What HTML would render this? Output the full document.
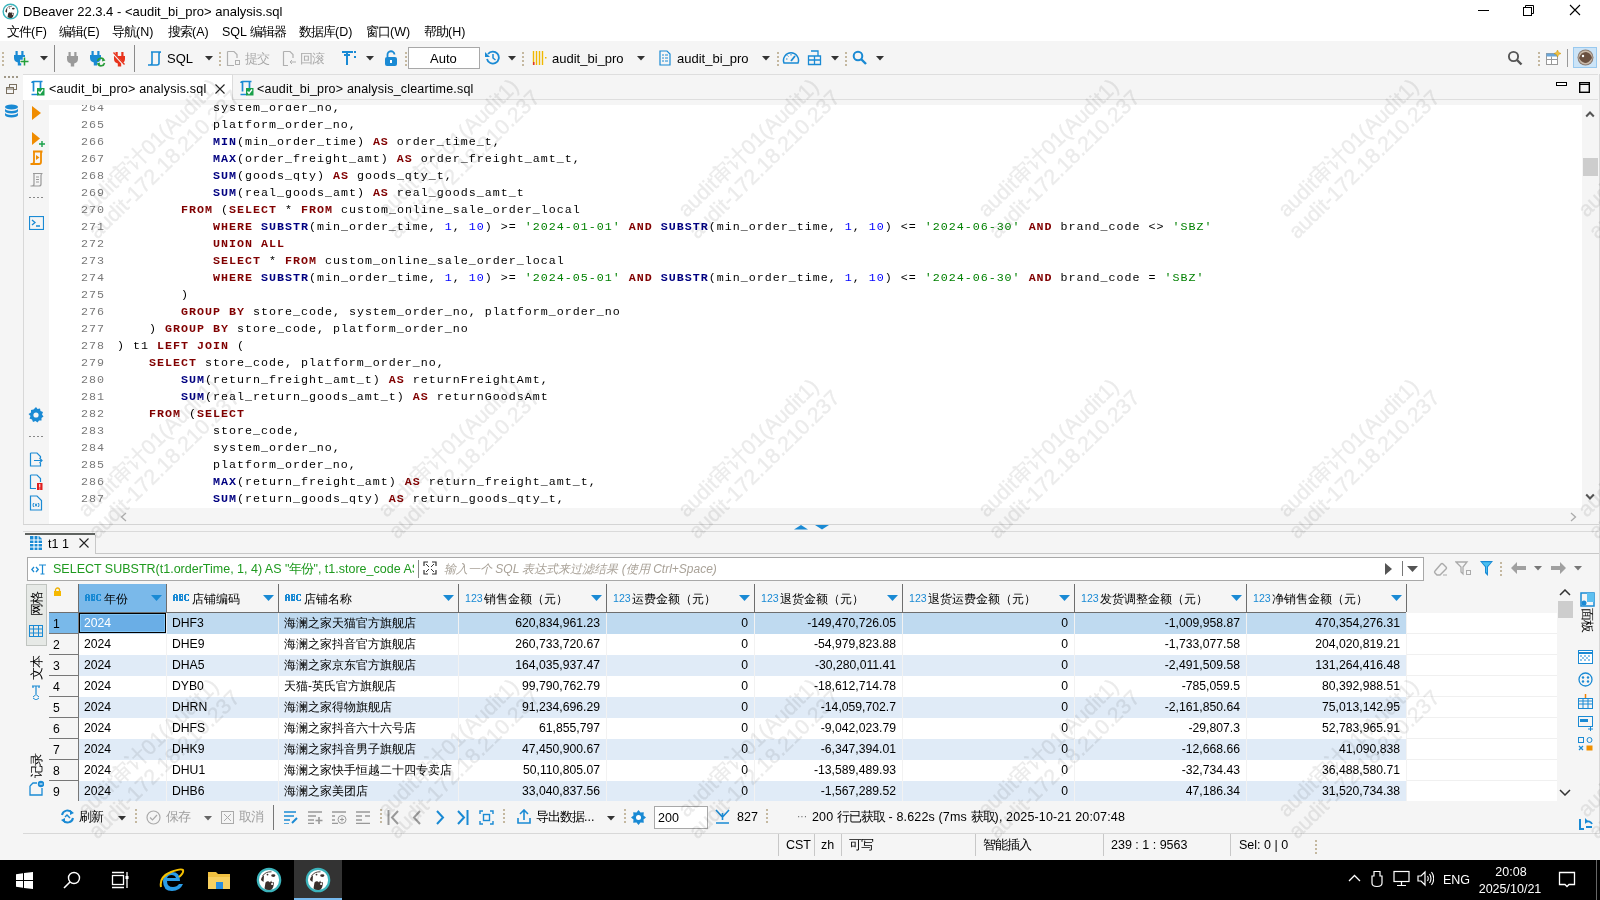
<!DOCTYPE html><html><head><meta charset="utf-8"><style>html,body{margin:0;padding:0;}body{width:1600px;height:900px;overflow:hidden;position:relative;background:#fff;font-family:"Liberation Sans",sans-serif;}div{box-sizing:border-box;}svg{display:block}</style></head><body>
<div style="position:absolute;left:0px;top:0px;width:1600px;height:41px;background:#fff"></div>
<svg style="position:absolute;left:2px;top:3px;" width="17" height="17" viewBox="0 0 17 17"><g transform="scale(0.653846)"><circle cx="13" cy="13" r="11.2" fill="#fff" stroke="#3cb4bc" stroke-width="2.2"/><path d="M5 13 Q5.5 9 8 8.5 L7.5 15 Z" fill="#3a2e2a"/><path d="M6.5 9 Q9.5 4.5 15.5 4.8" stroke="#3a2e2a" stroke-width="0.9" fill="none"/><ellipse cx="17.3" cy="8.6" rx="2.1" ry="1.4" fill="#3a2e2a"/><circle cx="11.5" cy="7.6" r="0.9" fill="#3a2e2a"/><path d="M8.5 21.5 L9.5 15.5 Q12 13 14 15.5 L15.2 13.5 Q15.5 16.5 18 15 L17.5 19 Q17 21 15.5 22.5 Q12 24 8.5 21.5Z" fill="#3a2e2a"/><rect x="15.3" y="16" width="1.6" height="2" fill="#fff"/></g></svg>
<div style="position:absolute;left:23px;top:4.60px;height:13px;line-height:13px;font-size:13px;font-family:'Liberation Sans', sans-serif;color:#000;font-weight:normal;white-space:pre;">DBeaver 22.3.4 - &lt;audit_bi_pro&gt; analysis.sql</div>
<div style="position:absolute;left:1478px;top:10px;width:11px;height:1px;background:#000"></div>
<svg style="position:absolute;left:1522px;top:4px;" width="14" height="14" viewBox="0 0 14 14"><rect x="1.5" y="3.5" width="8" height="8" fill="none" stroke="#000"/><path d="M3.5 3.5 V1.5 H11.5 V9.5 H9.5" fill="none" stroke="#000"/></svg>
<svg style="position:absolute;left:1569px;top:4px;" width="12" height="12" viewBox="0 0 12 12"><path d="M1 1 L11 11 M11 1 L1 11" stroke="#000" stroke-width="1.1"/></svg>
<div style="position:absolute;left:7px;top:26.42px;height:12.5px;line-height:12.5px;font-size:12.5px;font-family:'Liberation Sans', sans-serif;color:#000;font-weight:normal;white-space:pre;"><span style="display:inline-block;width:12px;text-align:center">文</span><span style="display:inline-block;width:12px;text-align:center">件</span>(F)</div>
<div style="position:absolute;left:59px;top:26.42px;height:12.5px;line-height:12.5px;font-size:12.5px;font-family:'Liberation Sans', sans-serif;color:#000;font-weight:normal;white-space:pre;"><span style="display:inline-block;width:12px;text-align:center">编</span><span style="display:inline-block;width:12px;text-align:center">辑</span>(E)</div>
<div style="position:absolute;left:112px;top:26.42px;height:12.5px;line-height:12.5px;font-size:12.5px;font-family:'Liberation Sans', sans-serif;color:#000;font-weight:normal;white-space:pre;"><span style="display:inline-block;width:12px;text-align:center">导</span><span style="display:inline-block;width:12px;text-align:center">航</span>(N)</div>
<div style="position:absolute;left:168px;top:26.42px;height:12.5px;line-height:12.5px;font-size:12.5px;font-family:'Liberation Sans', sans-serif;color:#000;font-weight:normal;white-space:pre;"><span style="display:inline-block;width:12px;text-align:center">搜</span><span style="display:inline-block;width:12px;text-align:center">索</span>(A)</div>
<div style="position:absolute;left:222px;top:26.42px;height:12.5px;line-height:12.5px;font-size:12.5px;font-family:'Liberation Sans', sans-serif;color:#000;font-weight:normal;white-space:pre;">SQL <span style="display:inline-block;width:12px;text-align:center">编</span><span style="display:inline-block;width:12px;text-align:center">辑</span><span style="display:inline-block;width:12px;text-align:center">器</span></div>
<div style="position:absolute;left:299px;top:26.42px;height:12.5px;line-height:12.5px;font-size:12.5px;font-family:'Liberation Sans', sans-serif;color:#000;font-weight:normal;white-space:pre;"><span style="display:inline-block;width:12px;text-align:center">数</span><span style="display:inline-block;width:12px;text-align:center">据</span><span style="display:inline-block;width:12px;text-align:center">库</span>(D)</div>
<div style="position:absolute;left:366px;top:26.42px;height:12.5px;line-height:12.5px;font-size:12.5px;font-family:'Liberation Sans', sans-serif;color:#000;font-weight:normal;white-space:pre;"><span style="display:inline-block;width:12px;text-align:center">窗</span><span style="display:inline-block;width:12px;text-align:center">口</span>(W)</div>
<div style="position:absolute;left:424px;top:26.42px;height:12.5px;line-height:12.5px;font-size:12.5px;font-family:'Liberation Sans', sans-serif;color:#000;font-weight:normal;white-space:pre;"><span style="display:inline-block;width:12px;text-align:center">帮</span><span style="display:inline-block;width:12px;text-align:center">助</span>(H)</div>
<div style="position:absolute;left:0px;top:41px;width:1600px;height:33px;background:#f5f5f5"></div>
<div style="position:absolute;left:2px;top:52px;width:2px;height:2px;background:#c4b8a0"></div>
<div style="position:absolute;left:2px;top:56px;width:2px;height:2px;background:#c4b8a0"></div>
<div style="position:absolute;left:2px;top:60px;width:2px;height:2px;background:#c4b8a0"></div>
<div style="position:absolute;left:2px;top:64px;width:2px;height:2px;background:#c4b8a0"></div>
<svg style="position:absolute;left:14px;top:51px;" width="12" height="15" viewBox="0 0 12 15"><rect x="1.5" y="0" width="2.2" height="4" fill="#1a8ad4"/><rect x="7.3" y="0" width="2.2" height="4" fill="#1a8ad4"/><path d="M0 4 H11 V7 Q11 10.5 7.2 11.5 V14.5 H3.8 V11.5 Q0 10.5 0 7Z" fill="#1a8ad4"/></svg>
<svg style="position:absolute;left:20px;top:57px;" width="9" height="9" viewBox="0 0 9 9"><path d="M4.5 0 V9 M0 4.5 H9" stroke="#f5f5f5" stroke-width="3.5"/><path d="M4.5 0.5 V8.5 M0.5 4.5 H8.5" stroke="#22a03a" stroke-width="1.5"/></svg>
<svg style="position:absolute;left:40px;top:56px;" width="8" height="5" viewBox="0 0 8 5"><path d="M0 0 H8 L4 4.5Z" fill="#333"/></svg>
<div style="position:absolute;left:54px;top:45px;width:1px;height:27px;background:#8a8a8a"></div>
<svg style="position:absolute;left:67px;top:52px;" width="12" height="15" viewBox="0 0 12 15"><rect x="1.5" y="0" width="2.2" height="4" fill="#9a9a9a"/><rect x="7.3" y="0" width="2.2" height="4" fill="#9a9a9a"/><path d="M0 4 H11 V7 Q11 10.5 7.2 11.5 V14.5 H3.8 V11.5 Q0 10.5 0 7Z" fill="#9a9a9a"/></svg>
<svg style="position:absolute;left:90px;top:51px;" width="12" height="15" viewBox="0 0 12 15"><rect x="1.5" y="0" width="2.2" height="4" fill="#1a8ad4"/><rect x="7.3" y="0" width="2.2" height="4" fill="#1a8ad4"/><path d="M0 4 H11 V7 Q11 10.5 7.2 11.5 V14.5 H3.8 V11.5 Q0 10.5 0 7Z" fill="#1a8ad4"/></svg>
<svg style="position:absolute;left:96px;top:57px;" width="10" height="10" viewBox="0 0 10 10"><path d="M1.5 4 A3.5 3.5 0 0 1 8 3 M8.5 6 A3.5 3.5 0 0 1 2 7" stroke="#2a9d3a" stroke-width="1.6" fill="none"/><path d="M6.5 1 L9.5 3.5 L6 4.5Z M3.5 9 L0.5 6.5 L4 5.5Z" fill="#2a9d3a"/></svg>
<svg style="position:absolute;left:114px;top:52px;" width="12" height="15" viewBox="0 0 12 15"><rect x="1.5" y="0" width="2.2" height="4" fill="#e8331c"/><rect x="7.3" y="0" width="2.2" height="4" fill="#e8331c"/><path d="M0 4 H11 V7 Q11 10.5 7.2 11.5 V14.5 H3.8 V11.5 Q0 10.5 0 7Z" fill="#e8331c"/></svg>
<svg style="position:absolute;left:112px;top:52px;" width="14" height="14" viewBox="0 0 14 14"><path d="M2 2 L12 13" stroke="#f5f5f5" stroke-width="2.2"/><path d="M1.5 0.5 L12.5 12.5" stroke="#e8331c" stroke-width="1.3"/></svg>
<div style="position:absolute;left:134px;top:45px;width:1px;height:27px;background:#8a8a8a"></div>
<svg style="position:absolute;left:147px;top:51px;" width="16" height="15" viewBox="0 0 16 15"><path d="M4 1 H14 M5 1 V12 Q5 14 3 14 H1 M14 1 Q12 1 12 3 V12 Q12 14 10 14 H2" stroke="#1a8ad4" stroke-width="1.6" fill="none"/></svg>
<div style="position:absolute;left:167px;top:52.30px;height:13px;line-height:13px;font-size:13px;font-family:'Liberation Sans', sans-serif;color:#000;font-weight:normal;white-space:pre;">SQL</div>
<svg style="position:absolute;left:205px;top:56px;" width="8" height="5" viewBox="0 0 8 5"><path d="M0 0 H8 L4 4.5Z" fill="#333"/></svg>
<div style="position:absolute;left:219px;top:52px;width:2px;height:2px;background:#c4b8a0"></div>
<div style="position:absolute;left:219px;top:56px;width:2px;height:2px;background:#c4b8a0"></div>
<div style="position:absolute;left:219px;top:60px;width:2px;height:2px;background:#c4b8a0"></div>
<div style="position:absolute;left:219px;top:64px;width:2px;height:2px;background:#c4b8a0"></div>
<svg style="position:absolute;left:226px;top:50px;" width="15" height="17" viewBox="0 0 15 17"><path d="M1.5 1.5 H8 L11 4.5 V8 M1.5 1.5 V15.5 H8" stroke="#b0b0b0" stroke-width="1.2" fill="none"/><rect x="9.5" y="10.5" width="4" height="4" stroke="#b0b0b0" fill="none"/></svg>
<div style="position:absolute;left:245px;top:53.42px;height:12.5px;line-height:12.5px;font-size:12.5px;font-family:'Liberation Sans', sans-serif;color:#a8a8a8;font-weight:normal;white-space:pre;"><span style="display:inline-block;width:12px;text-align:center">提</span><span style="display:inline-block;width:12px;text-align:center">交</span></div>
<svg style="position:absolute;left:282px;top:50px;" width="15" height="17" viewBox="0 0 15 17"><path d="M1.5 1.5 H8 L11 4.5 V8 M1.5 1.5 V15.5 H6" stroke="#b0b0b0" stroke-width="1.2" fill="none"/><path d="M8 12 H14 M10 10 L8 12 L10 14" stroke="#b0b0b0" fill="none"/></svg>
<div style="position:absolute;left:300px;top:53.42px;height:12.5px;line-height:12.5px;font-size:12.5px;font-family:'Liberation Sans', sans-serif;color:#a8a8a8;font-weight:normal;white-space:pre;"><span style="display:inline-block;width:12px;text-align:center">回</span><span style="display:inline-block;width:12px;text-align:center">滚</span></div>
<svg style="position:absolute;left:341px;top:50px;" width="16" height="16" viewBox="0 0 16 16"><path d="M1 2 H12 M6 2 V15 M3 5 H9" stroke="#1a8ad4" stroke-width="2" fill="none"/><rect x="13" y="1" width="2" height="2" fill="#1a8ad4"/><rect x="13" y="6" width="2" height="2" fill="#1a8ad4"/></svg>
<svg style="position:absolute;left:366px;top:56px;" width="8" height="5" viewBox="0 0 8 5"><path d="M0 0 H8 L4 4.5Z" fill="#333"/></svg>
<svg style="position:absolute;left:384px;top:50px;" width="14" height="16" viewBox="0 0 14 16"><path d="M3.5 7 V5 A3.5 3.5 0 0 1 10.5 4.5" stroke="#1a8ad4" stroke-width="1.8" fill="none"/><rect x="1" y="7" width="12" height="9" rx="2" fill="#1a8ad4"/><rect x="6" y="10" width="2" height="3" fill="#fff"/></svg>
<div style="position:absolute;left:405px;top:52px;width:2px;height:2px;background:#c4b8a0"></div>
<div style="position:absolute;left:405px;top:56px;width:2px;height:2px;background:#c4b8a0"></div>
<div style="position:absolute;left:405px;top:60px;width:2px;height:2px;background:#c4b8a0"></div>
<div style="position:absolute;left:405px;top:64px;width:2px;height:2px;background:#c4b8a0"></div>
<div style="position:absolute;left:408px;top:47px;width:72px;height:22px;background:#fff;border:1px solid #a8a8a8"></div>
<div style="position:absolute;left:430px;top:52.30px;height:13px;line-height:13px;font-size:13px;font-family:'Liberation Sans', sans-serif;color:#000;font-weight:normal;white-space:pre;">Auto</div>
<svg style="position:absolute;left:485px;top:50px;" width="15" height="15" viewBox="0 0 15 15"><path d="M3 4 A6 6 0 1 1 2 9" stroke="#1a8ad4" stroke-width="1.8" fill="none"/><path d="M0 2 L5 7 L0 7Z" fill="#1a8ad4"/><path d="M8 4 V8 L10.5 10" stroke="#1a8ad4" stroke-width="1.5" fill="none"/></svg>
<svg style="position:absolute;left:508px;top:56px;" width="8" height="5" viewBox="0 0 8 5"><path d="M0 0 H8 L4 4.5Z" fill="#333"/></svg>
<div style="position:absolute;left:522px;top:52px;width:2px;height:2px;background:#c4b8a0"></div>
<div style="position:absolute;left:522px;top:56px;width:2px;height:2px;background:#c4b8a0"></div>
<div style="position:absolute;left:522px;top:60px;width:2px;height:2px;background:#c4b8a0"></div>
<div style="position:absolute;left:522px;top:64px;width:2px;height:2px;background:#c4b8a0"></div>
<svg style="position:absolute;left:532px;top:50px;" width="15" height="16" viewBox="0 0 15 16"><path d="M1.5 1 V15 M4.5 1 V15 M7.5 1 V15 M10.5 1 V15" stroke="#f0b800" stroke-width="1.4"/><rect x="13" y="7" width="1.5" height="1.5" fill="#f0b800"/><rect x="1" y="12" width="1.5" height="3" fill="#e03030"/></svg>
<div style="position:absolute;left:552px;top:52.30px;height:13px;line-height:13px;font-size:13px;font-family:'Liberation Sans', sans-serif;color:#000;font-weight:normal;white-space:pre;">audit_bi_pro</div>
<svg style="position:absolute;left:637px;top:56px;" width="8" height="5" viewBox="0 0 8 5"><path d="M0 0 H8 L4 4.5Z" fill="#333"/></svg>
<svg style="position:absolute;left:659px;top:50px;" width="12" height="16" viewBox="0 0 12 16"><path d="M1 1 H8 L11 4 V15 H1Z" stroke="#1a8ad4" stroke-width="1.2" fill="none"/><path d="M3 5 H5 M6 5 H9 M3 8 H5 M6 8 H9 M3 11 H5 M6 11 H9" stroke="#1a8ad4"/></svg>
<div style="position:absolute;left:677px;top:52.30px;height:13px;line-height:13px;font-size:13px;font-family:'Liberation Sans', sans-serif;color:#000;font-weight:normal;white-space:pre;">audit_bi_pro</div>
<svg style="position:absolute;left:762px;top:56px;" width="8" height="5" viewBox="0 0 8 5"><path d="M0 0 H8 L4 4.5Z" fill="#333"/></svg>
<div style="position:absolute;left:777px;top:52px;width:2px;height:2px;background:#c4b8a0"></div>
<div style="position:absolute;left:777px;top:56px;width:2px;height:2px;background:#c4b8a0"></div>
<div style="position:absolute;left:777px;top:60px;width:2px;height:2px;background:#c4b8a0"></div>
<div style="position:absolute;left:777px;top:64px;width:2px;height:2px;background:#c4b8a0"></div>
<svg style="position:absolute;left:782px;top:50px;" width="18" height="16" viewBox="0 0 18 16"><path d="M2 13 A7.5 7.5 0 1 1 16 13 Z" stroke="#1a8ad4" stroke-width="1.5" fill="none"/><path d="M9 11 L13 6" stroke="#1a8ad4" stroke-width="1.8"/><path d="M4 9 H5.5 M9 4 V5.5 M5.5 5.5 L6.5 6.5" stroke="#1a8ad4"/></svg>
<svg style="position:absolute;left:807px;top:50px;" width="15" height="16" viewBox="0 0 15 16"><path d="M4 1 H11 V6 M1.5 6 H13.5 V14.5 H1.5Z M1.5 10 H13.5 M7.5 6 V14.5" stroke="#1a8ad4" stroke-width="1.3" fill="none"/></svg>
<svg style="position:absolute;left:831px;top:56px;" width="8" height="5" viewBox="0 0 8 5"><path d="M0 0 H8 L4 4.5Z" fill="#333"/></svg>
<div style="position:absolute;left:845px;top:52px;width:2px;height:2px;background:#c4b8a0"></div>
<div style="position:absolute;left:845px;top:56px;width:2px;height:2px;background:#c4b8a0"></div>
<div style="position:absolute;left:845px;top:60px;width:2px;height:2px;background:#c4b8a0"></div>
<div style="position:absolute;left:845px;top:64px;width:2px;height:2px;background:#c4b8a0"></div>
<svg style="position:absolute;left:852px;top:50px;" width="15" height="15" viewBox="0 0 15 15"><circle cx="6" cy="6" r="4.3" stroke="#1a8ad4" stroke-width="2" fill="none"/><path d="M9 9 L14 14" stroke="#1a8ad4" stroke-width="2.4"/></svg>
<svg style="position:absolute;left:876px;top:56px;" width="8" height="5" viewBox="0 0 8 5"><path d="M0 0 H8 L4 4.5Z" fill="#333"/></svg>
<svg style="position:absolute;left:1507px;top:50px;" width="16" height="16" viewBox="0 0 16 16"><circle cx="6.5" cy="6.5" r="4.6" stroke="#555" stroke-width="1.9" fill="none"/><path d="M10 10 L14.5 14.5" stroke="#555" stroke-width="2.4"/></svg>
<div style="position:absolute;left:1538px;top:52px;width:2px;height:2px;background:#c4b8a0"></div>
<div style="position:absolute;left:1538px;top:56px;width:2px;height:2px;background:#c4b8a0"></div>
<div style="position:absolute;left:1538px;top:60px;width:2px;height:2px;background:#c4b8a0"></div>
<div style="position:absolute;left:1538px;top:64px;width:2px;height:2px;background:#c4b8a0"></div>
<svg style="position:absolute;left:1545px;top:49px;" width="17" height="17" viewBox="0 0 17 17"><rect x="1.5" y="4.5" width="11" height="11" stroke="#999" fill="#fff"/><rect x="1.5" y="4.5" width="11" height="3" fill="#6aa6d8"/><path d="M1.5 10.5 H12.5 M6.5 7.5 V15.5" stroke="#999"/><path d="M12.5 1 L13.6 3.4 L16 4.5 L13.6 5.6 L12.5 8 L11.4 5.6 L9 4.5 L11.4 3.4Z" fill="#f0c040" stroke="#c89000" stroke-width="0.5"/></svg>
<div style="position:absolute;left:1567px;top:49px;width:1px;height:18px;background:#999"></div>
<div style="position:absolute;left:1573px;top:47px;width:24px;height:21px;background:#cce4f7;border:1px solid #99c9ef"></div>
<svg style="position:absolute;left:1577px;top:49px;" width="17" height="17" viewBox="0 0 17 17"><circle cx="8.5" cy="8.5" r="8" fill="#8a7a70"/><circle cx="8.5" cy="8.5" r="7" fill="#c8b8a8"/><path d="M2 9 Q4 3 9 3 Q14 4 15 9 Q12 14 8 14 Q4 13 2 9Z" fill="#6a5040"/><circle cx="6" cy="7" r="1.2" fill="#fff"/></svg>
<div style="position:absolute;left:0px;top:74px;width:23px;height:786px;background:#f5f5f5"></div>
<div style="position:absolute;left:23px;top:74px;width:1px;height:759px;background:#d8d8d8"></div>
<div style="position:absolute;left:4px;top:76px;width:2px;height:2px;background:#a09888"></div>
<div style="position:absolute;left:8px;top:76px;width:2px;height:2px;background:#a09888"></div>
<div style="position:absolute;left:12px;top:76px;width:2px;height:2px;background:#a09888"></div>
<div style="position:absolute;left:16px;top:76px;width:2px;height:2px;background:#a09888"></div>
<svg style="position:absolute;left:6px;top:84px;" width="11" height="10" viewBox="0 0 11 10"><rect x="3.5" y="0.5" width="7" height="5" fill="none" stroke="#7a7060"/><rect x="0.5" y="3.5" width="7" height="6" fill="#f5f5f5" stroke="#7a7060"/><path d="M1 5 H7" stroke="#7a7060"/></svg>
<svg style="position:absolute;left:4px;top:104px;" width="15" height="15" viewBox="0 0 15 15"><ellipse cx="7.5" cy="3" rx="6.5" ry="2.5" fill="#1a8ad4"/><path d="M1 4.5 V7 A6.5 2.5 0 0 0 14 7 V4.5 A6.5 2.5 0 0 1 1 4.5Z M1 8.5 V11 A6.5 2.5 0 0 0 14 11 V8.5 A6.5 2.5 0 0 1 1 8.5Z" fill="#1a8ad4"/></svg>
<div style="position:absolute;left:24px;top:74px;width:1576px;height:26px;background:#f5f5f5"></div>
<div style="position:absolute;left:232px;top:74px;width:1366px;height:1px;background:#dedede"></div>
<div style="position:absolute;left:232px;top:99px;width:1366px;height:1px;background:#dedede"></div>
<div style="position:absolute;left:23px;top:74px;width:210px;height:26px;background:#fff;border:1px solid #dcdcdc;border-bottom:none;border-left:none"></div>
<svg style="position:absolute;left:29px;top:80px;" width="16" height="16" viewBox="0 0 16 16"><path d="M2.5 14.5 H9 M3 3 Q3 1.5 4.5 1.5 H13.5 M4.5 2 V11.5 M11.5 2 V10" stroke="#1a8ad4" stroke-width="1.7" fill="none"/><rect x="8" y="8" width="7.5" height="7.5" fill="#1aa04a"/><path d="M9.5 11.5 L11 13.5 L14 9.5" stroke="#fff" stroke-width="1.3" fill="none"/></svg>
<div style="position:absolute;left:49px;top:83.12px;height:12.5px;line-height:12.5px;font-size:12.5px;font-family:'Liberation Sans', sans-serif;color:#000;font-weight:normal;white-space:pre;letter-spacing:0.22px">&lt;audit_bi_pro&gt; analysis.sql</div>
<svg style="position:absolute;left:215px;top:84px;" width="10" height="10" viewBox="0 0 10 10"><path d="M0.5 0.5 L9.5 9.5 M9.5 0.5 L0.5 9.5" stroke="#222" stroke-width="1.1"/></svg>
<svg style="position:absolute;left:238px;top:80px;" width="16" height="16" viewBox="0 0 16 16"><path d="M2.5 14.5 H9 M3 3 Q3 1.5 4.5 1.5 H13.5 M4.5 2 V11.5 M11.5 2 V10" stroke="#1a8ad4" stroke-width="1.7" fill="none"/><rect x="8" y="8" width="7.5" height="7.5" fill="#1aa04a"/><path d="M9.5 11.5 L11 13.5 L14 9.5" stroke="#fff" stroke-width="1.3" fill="none"/></svg>
<div style="position:absolute;left:257px;top:83.12px;height:12.5px;line-height:12.5px;font-size:12.5px;font-family:'Liberation Sans', sans-serif;color:#000;font-weight:normal;white-space:pre;letter-spacing:0.2px">&lt;audit_bi_pro&gt; analysis_cleartime.sql</div>
<div style="position:absolute;left:1556px;top:82px;width:11px;height:4px;border:1px solid #000;background:#fff"></div>
<svg style="position:absolute;left:1579px;top:82px;" width="11" height="11" viewBox="0 0 11 11"><rect x="0.7" y="0.7" width="9.6" height="9.6" fill="none" stroke="#000" stroke-width="1.4"/><path d="M0.5 2.5 H10.5" stroke="#000" stroke-width="1"/></svg>
<div style="position:absolute;left:24px;top:100px;width:1575px;height:424px;background:#f5f5f5"></div>
<div style="position:absolute;left:49px;top:105px;width:1533px;height:419px;background:#fff"></div>
<svg style="position:absolute;left:32px;top:106px;" width="9" height="14" viewBox="0 0 9 14"><path d="M0 0 L9 7 L0 14Z" fill="#f08c00"/></svg>
<svg style="position:absolute;left:32px;top:132px;" width="13" height="15" viewBox="0 0 13 15"><path d="M0 0 L8 6.5 L0 13Z" fill="#f08c00"/><path d="M10 9 V15 M7 12 H13" stroke="#1aa04a" stroke-width="1.4"/></svg>
<svg style="position:absolute;left:29px;top:150px;" width="15" height="15" viewBox="0 0 15 15"><path d="M4 1.5 H13.5 M5 1.5 V12 Q5 14 3 14 H1.5 M13.5 1.5 Q12 1.5 12 3.5 V12 Q12 14 10 14 H3" stroke="#f08c00" stroke-width="1.8" fill="none"/><path d="M7 5 L10.5 7.5 L7 10Z" fill="#f08c00"/></svg>
<svg style="position:absolute;left:29px;top:172px;" width="15" height="15" viewBox="0 0 15 15"><path d="M4 1.5 H13.5 M5 1.5 V12 Q5 14 3 14 H1.5 M13.5 1.5 Q12 1.5 12 3.5 V12 Q12 14 10 14 H3" stroke="#999" stroke-width="1.2" fill="none"/><path d="M7 5 H10 M7 7.5 H10 M7 10 H10" stroke="#999"/></svg>
<div style="position:absolute;left:29px;top:197px;width:2px;height:1px;background:#888"></div>
<div style="position:absolute;left:33px;top:197px;width:2px;height:1px;background:#888"></div>
<div style="position:absolute;left:37px;top:197px;width:2px;height:1px;background:#888"></div>
<div style="position:absolute;left:41px;top:197px;width:2px;height:1px;background:#888"></div>
<svg style="position:absolute;left:29px;top:216px;" width="15" height="14" viewBox="0 0 15 14"><rect x="0.5" y="0.5" width="14" height="13" fill="none" stroke="#1a8ad4" stroke-width="1.2"/><path d="M3 4 L6 6.5 L3 9 M7 10 H11" stroke="#1a8ad4" stroke-width="1.3" fill="none"/></svg>
<svg style="position:absolute;left:28px;top:407px;" width="16" height="16" viewBox="0 0 16 16"><path d="M8 0 L9.5 2 L12 1.5 L12.5 4 L15 5 L14 7.5 L15.5 9.5 L13.5 11 L13.5 13.5 L11 13.5 L9.5 15.5 L7.5 14 L5 15 L4 12.5 L1.5 11.5 L2.5 9 L0.5 7 L3 5.5 L3 3 L5.5 2.5 Z" fill="#1a8ad4"/><circle cx="8" cy="8" r="2.6" fill="#f5f5f5"/></svg>
<div style="position:absolute;left:29px;top:436px;width:2px;height:1px;background:#888"></div>
<div style="position:absolute;left:33px;top:436px;width:2px;height:1px;background:#888"></div>
<div style="position:absolute;left:37px;top:436px;width:2px;height:1px;background:#888"></div>
<div style="position:absolute;left:41px;top:436px;width:2px;height:1px;background:#888"></div>
<svg style="position:absolute;left:29px;top:452px;" width="14" height="15" viewBox="0 0 14 15"><path d="M1.5 1 H8 L11.5 4.5 V6 M1.5 1 V14 H11.5 V11" stroke="#1a8ad4" stroke-width="1.2" fill="none"/><path d="M5 8.5 H13 M10.5 6 L13 8.5 L10.5 11" stroke="#1a8ad4" stroke-width="1.2" fill="none"/></svg>
<svg style="position:absolute;left:29px;top:474px;" width="14" height="16" viewBox="0 0 14 16"><path d="M1.5 1 H8 L11.5 4.5 V8 M1.5 1 V14.5 H7" stroke="#1a8ad4" stroke-width="1.2" fill="none"/><rect x="8" y="9" width="5.5" height="7" fill="#e02020"/><path d="M10.75 10 V13.5 M10.75 14.5 V15.5" stroke="#fff"/></svg>
<svg style="position:absolute;left:29px;top:495px;" width="14" height="16" viewBox="0 0 14 16"><path d="M1.5 1 H8 L12.5 5.5 V15 H1.5Z" stroke="#1a8ad4" stroke-width="1.2" fill="none"/><path d="M4.5 8 Q3.5 10 4.5 12 M9.5 8 Q10.5 10 9.5 12 M6 8.5 L8 11.5 M8 8.5 L6 11.5" stroke="#1a8ad4" fill="none"/></svg>
<div style="position:absolute;left:1582px;top:105px;width:17px;height:419px;background:#f5f5f5"></div>
<svg style="position:absolute;left:1585px;top:110px;" width="10" height="8" viewBox="0 0 10 8"><path d="M1.2 6.5 L5 2.5 L8.8 6.5" stroke="#555" stroke-width="2" fill="none"/></svg>
<div style="position:absolute;left:1583px;top:158px;width:15px;height:18px;background:#cdcdcd"></div>
<svg style="position:absolute;left:1585px;top:493px;" width="10" height="8" viewBox="0 0 10 8"><path d="M1.2 1.5 L5 5.5 L8.8 1.5" stroke="#555" stroke-width="2" fill="none"/></svg>
<div style="position:absolute;left:110px;top:508px;width:1472px;height:16px;background:#f5f5f5"></div>
<svg style="position:absolute;left:120px;top:512px;" width="7" height="10" viewBox="0 0 7 10"><path d="M6 1 L1.5 5 L6 9" stroke="#aaa" stroke-width="1.3" fill="none"/></svg>
<svg style="position:absolute;left:1570px;top:512px;" width="7" height="10" viewBox="0 0 7 10"><path d="M1 1 L5.5 5 L1 9" stroke="#aaa" stroke-width="1.3" fill="none"/></svg>
<div style="position:absolute;left:23px;top:524px;width:1576px;height:1px;background:#d4d4d4"></div>
<div style="position:absolute;left:49px;top:105px;width:1533px;height:402px;overflow:hidden">
<div style="position:absolute;left:0;top:-5.11px;height:17px;line-height:17px;font-size:11.667px;font-family:'Liberation Mono', monospace;white-space:pre;color:#000;letter-spacing:1px"><span style="display:inline-block;width:56px;text-align:right;color:#787878">264</span><span style="position:absolute;left:68px">            system_order_no,</span></div>
<div style="position:absolute;left:0;top:11.89px;height:17px;line-height:17px;font-size:11.667px;font-family:'Liberation Mono', monospace;white-space:pre;color:#000;letter-spacing:1px"><span style="display:inline-block;width:56px;text-align:right;color:#787878">265</span><span style="position:absolute;left:68px">            platform_order_no,</span></div>
<div style="position:absolute;left:0;top:28.89px;height:17px;line-height:17px;font-size:11.667px;font-family:'Liberation Mono', monospace;white-space:pre;color:#000;letter-spacing:1px"><span style="display:inline-block;width:56px;text-align:right;color:#787878">266</span><span style="position:absolute;left:68px">            <b style="color:#000080">MIN</b>(min_order_time) <b style="color:#800000">AS</b> order_time_t,</span></div>
<div style="position:absolute;left:0;top:45.89px;height:17px;line-height:17px;font-size:11.667px;font-family:'Liberation Mono', monospace;white-space:pre;color:#000;letter-spacing:1px"><span style="display:inline-block;width:56px;text-align:right;color:#787878">267</span><span style="position:absolute;left:68px">            <b style="color:#000080">MAX</b>(order_freight_amt) <b style="color:#800000">AS</b> order_freight_amt_t,</span></div>
<div style="position:absolute;left:0;top:62.89px;height:17px;line-height:17px;font-size:11.667px;font-family:'Liberation Mono', monospace;white-space:pre;color:#000;letter-spacing:1px"><span style="display:inline-block;width:56px;text-align:right;color:#787878">268</span><span style="position:absolute;left:68px">            <b style="color:#000080">SUM</b>(goods_qty) <b style="color:#800000">AS</b> goods_qty_t,</span></div>
<div style="position:absolute;left:0;top:79.89px;height:17px;line-height:17px;font-size:11.667px;font-family:'Liberation Mono', monospace;white-space:pre;color:#000;letter-spacing:1px"><span style="display:inline-block;width:56px;text-align:right;color:#787878">269</span><span style="position:absolute;left:68px">            <b style="color:#000080">SUM</b>(real_goods_amt) <b style="color:#800000">AS</b> real_goods_amt_t</span></div>
<div style="position:absolute;left:0;top:96.89px;height:17px;line-height:17px;font-size:11.667px;font-family:'Liberation Mono', monospace;white-space:pre;color:#000;letter-spacing:1px"><span style="display:inline-block;width:56px;text-align:right;color:#787878">270</span><span style="position:absolute;left:68px">        <b style="color:#800000">FROM</b> (<b style="color:#800000">SELECT</b> * <b style="color:#800000">FROM</b> custom_online_sale_order_local</span></div>
<div style="position:absolute;left:0;top:113.89px;height:17px;line-height:17px;font-size:11.667px;font-family:'Liberation Mono', monospace;white-space:pre;color:#000;letter-spacing:1px"><span style="display:inline-block;width:56px;text-align:right;color:#787878">271</span><span style="position:absolute;left:68px">            <b style="color:#800000">WHERE</b> <b style="color:#000080">SUBSTR</b>(min_order_time, <span style="color:#0000ff">1</span>, <span style="color:#0000ff">10</span>) &gt;= <span style="color:#008000">&#x27;2024-01-01&#x27;</span> <b style="color:#800000">AND</b> <b style="color:#000080">SUBSTR</b>(min_order_time, <span style="color:#0000ff">1</span>, <span style="color:#0000ff">10</span>) &lt;= <span style="color:#008000">&#x27;2024-06-30&#x27;</span> <b style="color:#800000">AND</b> brand_code &lt;&gt; <span style="color:#008000">&#x27;SBZ&#x27;</span></span></div>
<div style="position:absolute;left:0;top:130.89px;height:17px;line-height:17px;font-size:11.667px;font-family:'Liberation Mono', monospace;white-space:pre;color:#000;letter-spacing:1px"><span style="display:inline-block;width:56px;text-align:right;color:#787878">272</span><span style="position:absolute;left:68px">            <b style="color:#800000">UNION</b> <b style="color:#800000">ALL</b></span></div>
<div style="position:absolute;left:0;top:147.89px;height:17px;line-height:17px;font-size:11.667px;font-family:'Liberation Mono', monospace;white-space:pre;color:#000;letter-spacing:1px"><span style="display:inline-block;width:56px;text-align:right;color:#787878">273</span><span style="position:absolute;left:68px">            <b style="color:#800000">SELECT</b> * <b style="color:#800000">FROM</b> custom_online_sale_order_local</span></div>
<div style="position:absolute;left:0;top:164.89px;height:17px;line-height:17px;font-size:11.667px;font-family:'Liberation Mono', monospace;white-space:pre;color:#000;letter-spacing:1px"><span style="display:inline-block;width:56px;text-align:right;color:#787878">274</span><span style="position:absolute;left:68px">            <b style="color:#800000">WHERE</b> <b style="color:#000080">SUBSTR</b>(min_order_time, <span style="color:#0000ff">1</span>, <span style="color:#0000ff">10</span>) &gt;= <span style="color:#008000">&#x27;2024-05-01&#x27;</span> <b style="color:#800000">AND</b> <b style="color:#000080">SUBSTR</b>(min_order_time, <span style="color:#0000ff">1</span>, <span style="color:#0000ff">10</span>) &lt;= <span style="color:#008000">&#x27;2024-06-30&#x27;</span> <b style="color:#800000">AND</b> brand_code = <span style="color:#008000">&#x27;SBZ&#x27;</span></span></div>
<div style="position:absolute;left:0;top:181.89px;height:17px;line-height:17px;font-size:11.667px;font-family:'Liberation Mono', monospace;white-space:pre;color:#000;letter-spacing:1px"><span style="display:inline-block;width:56px;text-align:right;color:#787878">275</span><span style="position:absolute;left:68px">        )</span></div>
<div style="position:absolute;left:0;top:198.89px;height:17px;line-height:17px;font-size:11.667px;font-family:'Liberation Mono', monospace;white-space:pre;color:#000;letter-spacing:1px"><span style="display:inline-block;width:56px;text-align:right;color:#787878">276</span><span style="position:absolute;left:68px">        <b style="color:#800000">GROUP</b> <b style="color:#800000">BY</b> store_code, system_order_no, platform_order_no</span></div>
<div style="position:absolute;left:0;top:215.89px;height:17px;line-height:17px;font-size:11.667px;font-family:'Liberation Mono', monospace;white-space:pre;color:#000;letter-spacing:1px"><span style="display:inline-block;width:56px;text-align:right;color:#787878">277</span><span style="position:absolute;left:68px">    ) <b style="color:#800000">GROUP</b> <b style="color:#800000">BY</b> store_code, platform_order_no</span></div>
<div style="position:absolute;left:0;top:232.89px;height:17px;line-height:17px;font-size:11.667px;font-family:'Liberation Mono', monospace;white-space:pre;color:#000;letter-spacing:1px"><span style="display:inline-block;width:56px;text-align:right;color:#787878">278</span><span style="position:absolute;left:68px">) t1 <b style="color:#800000">LEFT</b> <b style="color:#800000">JOIN</b> (</span></div>
<div style="position:absolute;left:0;top:249.89px;height:17px;line-height:17px;font-size:11.667px;font-family:'Liberation Mono', monospace;white-space:pre;color:#000;letter-spacing:1px"><span style="display:inline-block;width:56px;text-align:right;color:#787878">279</span><span style="position:absolute;left:68px">    <b style="color:#800000">SELECT</b> store_code, platform_order_no,</span></div>
<div style="position:absolute;left:0;top:266.89px;height:17px;line-height:17px;font-size:11.667px;font-family:'Liberation Mono', monospace;white-space:pre;color:#000;letter-spacing:1px"><span style="display:inline-block;width:56px;text-align:right;color:#787878">280</span><span style="position:absolute;left:68px">        <b style="color:#000080">SUM</b>(return_freight_amt_t) <b style="color:#800000">AS</b> returnFreightAmt,</span></div>
<div style="position:absolute;left:0;top:283.89px;height:17px;line-height:17px;font-size:11.667px;font-family:'Liberation Mono', monospace;white-space:pre;color:#000;letter-spacing:1px"><span style="display:inline-block;width:56px;text-align:right;color:#787878">281</span><span style="position:absolute;left:68px">        <b style="color:#000080">SUM</b>(real_return_goods_amt_t) <b style="color:#800000">AS</b> returnGoodsAmt</span></div>
<div style="position:absolute;left:0;top:300.89px;height:17px;line-height:17px;font-size:11.667px;font-family:'Liberation Mono', monospace;white-space:pre;color:#000;letter-spacing:1px"><span style="display:inline-block;width:56px;text-align:right;color:#787878">282</span><span style="position:absolute;left:68px">    <b style="color:#800000">FROM</b> (<b style="color:#800000">SELECT</b></span></div>
<div style="position:absolute;left:0;top:317.89px;height:17px;line-height:17px;font-size:11.667px;font-family:'Liberation Mono', monospace;white-space:pre;color:#000;letter-spacing:1px"><span style="display:inline-block;width:56px;text-align:right;color:#787878">283</span><span style="position:absolute;left:68px">            store_code,</span></div>
<div style="position:absolute;left:0;top:334.89px;height:17px;line-height:17px;font-size:11.667px;font-family:'Liberation Mono', monospace;white-space:pre;color:#000;letter-spacing:1px"><span style="display:inline-block;width:56px;text-align:right;color:#787878">284</span><span style="position:absolute;left:68px">            system_order_no,</span></div>
<div style="position:absolute;left:0;top:351.89px;height:17px;line-height:17px;font-size:11.667px;font-family:'Liberation Mono', monospace;white-space:pre;color:#000;letter-spacing:1px"><span style="display:inline-block;width:56px;text-align:right;color:#787878">285</span><span style="position:absolute;left:68px">            platform_order_no,</span></div>
<div style="position:absolute;left:0;top:368.89px;height:17px;line-height:17px;font-size:11.667px;font-family:'Liberation Mono', monospace;white-space:pre;color:#000;letter-spacing:1px"><span style="display:inline-block;width:56px;text-align:right;color:#787878">286</span><span style="position:absolute;left:68px">            <b style="color:#000080">MAX</b>(return_freight_amt) <b style="color:#800000">AS</b> return_freight_amt_t,</span></div>
<div style="position:absolute;left:0;top:385.89px;height:17px;line-height:17px;font-size:11.667px;font-family:'Liberation Mono', monospace;white-space:pre;color:#000;letter-spacing:1px"><span style="display:inline-block;width:56px;text-align:right;color:#787878">287</span><span style="position:absolute;left:68px">            <b style="color:#000080">SUM</b>(return_goods_qty) <b style="color:#800000">AS</b> return_goods_qty_t,</span></div>
</div>
<div style="position:absolute;left:23px;top:525px;width:1576px;height:6px;background:#f5f5f5"></div>
<div style="position:absolute;left:23px;top:531px;width:1576px;height:1px;background:#dadada"></div>
<svg style="position:absolute;left:794px;top:525px;" width="14" height="5" viewBox="0 0 14 5"><path d="M0 4.5 L7 0 L14 4.5Z" fill="#1a8ad4"/></svg>
<svg style="position:absolute;left:815px;top:525px;" width="14" height="5" viewBox="0 0 14 5"><path d="M0 0 L14 0 L7 4.5Z" fill="#1a8ad4"/></svg>
<div style="position:absolute;left:23px;top:532px;width:1576px;height:301px;background:#f5f5f5"></div>
<div style="position:absolute;left:95px;top:553px;width:1504px;height:1px;background:#c8c8c8"></div>
<div style="position:absolute;left:25px;top:533px;width:70px;height:2px;background:#5f6360"></div>
<div style="position:absolute;left:95px;top:535px;width:1px;height:19px;background:#c8c8c8"></div>
<svg style="position:absolute;left:30px;top:536px;" width="12" height="14" viewBox="0 0 12 14"><path d="M0 0 H9 L12 3 V14 H0Z" fill="#1a8ad4"/><path d="M0 4 H12 M0 7.5 H12 M0 11 H12 M4 0 V14 M8 0 V14" stroke="#fff" stroke-width="1.1"/></svg>
<div style="position:absolute;left:48px;top:538.42px;height:12.5px;line-height:12.5px;font-size:12.5px;font-family:'Liberation Sans', sans-serif;color:#000;font-weight:normal;white-space:pre;">t1 1</div>
<svg style="position:absolute;left:79px;top:538px;" width="10" height="10" viewBox="0 0 10 10"><path d="M0.5 0.5 L9.5 9.5 M9.5 0.5 L0.5 9.5" stroke="#222" stroke-width="1.1"/></svg>
<div style="position:absolute;left:27px;top:557px;width:1397px;height:24px;background:#fff;border:1px solid #a8a8a8"></div>
<svg style="position:absolute;left:31px;top:564px;" width="16" height="11" viewBox="0 0 16 11"><path d="M3 3 L0.8 5.5 L3 8 M5 3 L7.2 5.5 L5 8" stroke="#1a8ad4" stroke-width="1.3" fill="none"/><path d="M8 1 H15 M11.5 1 V10 M9.5 10 H13.5" stroke="#1a8ad4" stroke-width="1.2" fill="none"/></svg>
<div style="position:absolute;left:53px;top:560px;width:361px;height:18px;overflow:hidden">
<div style="position:absolute;left:0px;top:3.12px;height:12.5px;line-height:12.5px;font-size:12.5px;font-family:'Liberation Sans', sans-serif;color:#1f9a1f;font-weight:normal;white-space:pre;">SELECT SUBSTR(t1.orderTime, 1, 4) AS &quot;<span style="display:inline-block;width:12px;text-align:center">年</span><span style="display:inline-block;width:12px;text-align:center">份</span>&quot;, t1.store_code AS</div>
</div>
<div style="position:absolute;left:418px;top:560px;width:1px;height:18px;background:#888"></div>
<svg style="position:absolute;left:423px;top:561px;" width="14" height="14" viewBox="0 0 14 14"><path d="M1 5 V1 H5 M9 1 H13 V5 M13 9 V13 H9 M5 13 H1 V9" stroke="#333" stroke-width="1.2" fill="none"/><path d="M3 3 L6 6 M11 3 L8 6 M3 11 L6 8 M11 11 L8 8" stroke="#333"/></svg>
<div style="position:absolute;left:444px;top:563.34px;height:12px;line-height:12px;font-size:12px;font-family:'Liberation Sans', sans-serif;color:#a9a298;font-weight:normal;white-space:pre;font-style:italic"><span style="display:inline-block;width:12px;text-align:center">输</span><span style="display:inline-block;width:12px;text-align:center">入</span><span style="display:inline-block;width:12px;text-align:center">一</span><span style="display:inline-block;width:12px;text-align:center">个</span> SQL <span style="display:inline-block;width:12px;text-align:center">表</span><span style="display:inline-block;width:12px;text-align:center">达</span><span style="display:inline-block;width:12px;text-align:center">式</span><span style="display:inline-block;width:12px;text-align:center">来</span><span style="display:inline-block;width:12px;text-align:center">过</span><span style="display:inline-block;width:12px;text-align:center">滤</span><span style="display:inline-block;width:12px;text-align:center">结</span><span style="display:inline-block;width:12px;text-align:center">果</span> (<span style="display:inline-block;width:12px;text-align:center">使</span><span style="display:inline-block;width:12px;text-align:center">用</span> Ctrl+Space)</div>
<svg style="position:absolute;left:1385px;top:563px;" width="7" height="12" viewBox="0 0 7 12"><path d="M0 0 L7 6 L0 12Z" fill="#555"/></svg>
<div style="position:absolute;left:1402px;top:561px;width:1px;height:15px;background:#777"></div>
<svg style="position:absolute;left:1407px;top:566px;" width="11" height="6" viewBox="0 0 11 6"><path d="M0 0 H11 L5.5 6Z" fill="#555"/></svg>
<svg style="position:absolute;left:1433px;top:561px;" width="15" height="15" viewBox="0 0 15 15"><path d="M2 10 L8 3 Q9 2 10 3 L13 6 Q14 7 13 8 L7 14 H4 L2 12 Q1 11 2 10Z" stroke="#aaa" stroke-width="1.4" fill="none"/><path d="M10 14 H14" stroke="#aaa"/></svg>
<svg style="position:absolute;left:1455px;top:561px;" width="16" height="15" viewBox="0 0 16 15"><path d="M1 1 H12 L8 6 V13 L6 11 V6Z" stroke="#aaa" stroke-width="1.3" fill="none"/><rect x="11.5" y="9.5" width="4" height="4" stroke="#aaa" fill="none"/></svg>
<svg style="position:absolute;left:1480px;top:561px;" width="13" height="15" viewBox="0 0 13 15"><path d="M0 0 H13 L8 6 V15 L5 12 V6Z" fill="#1a8ad4"/><path d="M2 1.2 H11 L7 5.5 V12 L6 11 V5.5Z" fill="#4cc0f0"/></svg>
<div style="position:absolute;left:1500px;top:562px;width:2px;height:2px;background:#c4b8a0"></div>
<div style="position:absolute;left:1500px;top:566px;width:2px;height:2px;background:#c4b8a0"></div>
<div style="position:absolute;left:1500px;top:570px;width:2px;height:2px;background:#c4b8a0"></div>
<div style="position:absolute;left:1500px;top:574px;width:2px;height:2px;background:#c4b8a0"></div>
<svg style="position:absolute;left:1511px;top:562px;" width="15" height="12" viewBox="0 0 15 12"><path d="M0 6 L6 0 V4 H15 V8 H6 V12Z" fill="#a0a0a0"/></svg>
<svg style="position:absolute;left:1534px;top:566px;" width="8" height="5" viewBox="0 0 8 5"><path d="M0 0 H8 L4 4.5Z" fill="#777"/></svg>
<svg style="position:absolute;left:1551px;top:562px;" width="15" height="12" viewBox="0 0 15 12"><path d="M15 6 L9 0 V4 H0 V8 H9 V12Z" fill="#a0a0a0"/></svg>
<svg style="position:absolute;left:1574px;top:566px;" width="8" height="5" viewBox="0 0 8 5"><path d="M0 0 H8 L4 4.5Z" fill="#777"/></svg>
<div style="position:absolute;left:26px;top:584px;width:21px;height:62px;background:#e6e9e6;border:1px solid #c0c4c0"></div>
<div style="position:absolute;left:26px;top:584px;width:21px;height:40px;"><div style="position:absolute;left:50%;top:50%;transform:translate(-50%,-50%) rotate(-90deg);font-size:12.5px;line-height:14px;white-space:nowrap;color:#000;font-family:'Liberation Sans', sans-serif"><span style="display:inline-block;width:12px;text-align:center">网</span><span style="display:inline-block;width:12px;text-align:center">格</span></div></div>
<svg style="position:absolute;left:29px;top:625px;" width="14" height="12" viewBox="0 0 14 12"><rect x="0.5" y="0.5" width="13" height="11" fill="none" stroke="#1a8ad4"/><path d="M0 4 H14 M0 8 H14 M4.5 0 V12 M9.5 0 V12" stroke="#1a8ad4"/></svg>
<div style="position:absolute;left:26px;top:652px;width:21px;height:32px;"><div style="position:absolute;left:50%;top:50%;transform:translate(-50%,-50%) rotate(-90deg);font-size:12.5px;line-height:14px;white-space:nowrap;color:#000;font-family:'Liberation Sans', sans-serif"><span style="display:inline-block;width:12px;text-align:center">文</span><span style="display:inline-block;width:12px;text-align:center">本</span></div></div>
<svg style="position:absolute;left:30px;top:685px;" width="12" height="15" viewBox="0 0 12 15"><path d="M2 1 H10 M6 1 V9 M3 3 V1 M9 3 V1" stroke="#1a8ad4" stroke-width="1.2" fill="none"/><path d="M3 12 L6 9.5 L9 12 M3 13 L6 15 L9 13" stroke="#1a8ad4" fill="none"/></svg>
<div style="position:absolute;left:26px;top:750px;width:21px;height:32px;"><div style="position:absolute;left:50%;top:50%;transform:translate(-50%,-50%) rotate(-90deg);font-size:12.5px;line-height:14px;white-space:nowrap;color:#000;font-family:'Liberation Sans', sans-serif"><span style="display:inline-block;width:12px;text-align:center">记</span><span style="display:inline-block;width:12px;text-align:center">录</span></div></div>
<svg style="position:absolute;left:29px;top:780px;" width="15" height="16" viewBox="0 0 15 16"><path d="M1 6 L4 3 H8 M1 6 V15 H13 V8" stroke="#1a8ad4" stroke-width="1.3" fill="none"/><circle cx="12" cy="4" r="3.2" fill="#1a8ad4"/><path d="M10.5 4 H13.5" stroke="#fff"/></svg>
<div style="position:absolute;left:49px;top:584px;width:1508px;height:28px;background:#f5f5f5"></div>
<div style="position:absolute;left:49px;top:613px;width:1508px;height:189px;background:#fff"></div>
<div style="position:absolute;left:79px;top:613px;width:1327px;height:21px;background:#bfdaf0"></div>
<div style="position:absolute;left:1406px;top:633px;width:151px;height:1px;background:#f0f0f0"></div>
<div style="position:absolute;left:49px;top:613px;width:30px;height:21px;background:#79b9ea;border-bottom:1px solid #777;border-right:1px solid #777"></div>
<div style="position:absolute;left:53px;top:617.67px;height:12.2px;line-height:12.2px;font-size:12.2px;font-family:'Liberation Sans', sans-serif;color:#000;font-weight:normal;white-space:pre;">1</div>
<div style="position:absolute;left:79px;top:634px;width:1327px;height:21px;background:#ffffff"></div>
<div style="position:absolute;left:1406px;top:654px;width:151px;height:1px;background:#f0f0f0"></div>
<div style="position:absolute;left:49px;top:634px;width:30px;height:21px;background:#f5f5f5;border-bottom:1px solid #777;border-right:1px solid #777"></div>
<div style="position:absolute;left:53px;top:638.67px;height:12.2px;line-height:12.2px;font-size:12.2px;font-family:'Liberation Sans', sans-serif;color:#000;font-weight:normal;white-space:pre;">2</div>
<div style="position:absolute;left:79px;top:655px;width:1327px;height:21px;background:#e0ebf7"></div>
<div style="position:absolute;left:1406px;top:675px;width:151px;height:1px;background:#f0f0f0"></div>
<div style="position:absolute;left:49px;top:655px;width:30px;height:21px;background:#f5f5f5;border-bottom:1px solid #777;border-right:1px solid #777"></div>
<div style="position:absolute;left:53px;top:659.67px;height:12.2px;line-height:12.2px;font-size:12.2px;font-family:'Liberation Sans', sans-serif;color:#000;font-weight:normal;white-space:pre;">3</div>
<div style="position:absolute;left:79px;top:676px;width:1327px;height:21px;background:#ffffff"></div>
<div style="position:absolute;left:1406px;top:696px;width:151px;height:1px;background:#f0f0f0"></div>
<div style="position:absolute;left:49px;top:676px;width:30px;height:21px;background:#f5f5f5;border-bottom:1px solid #777;border-right:1px solid #777"></div>
<div style="position:absolute;left:53px;top:680.67px;height:12.2px;line-height:12.2px;font-size:12.2px;font-family:'Liberation Sans', sans-serif;color:#000;font-weight:normal;white-space:pre;">4</div>
<div style="position:absolute;left:79px;top:697px;width:1327px;height:21px;background:#e0ebf7"></div>
<div style="position:absolute;left:1406px;top:717px;width:151px;height:1px;background:#f0f0f0"></div>
<div style="position:absolute;left:49px;top:697px;width:30px;height:21px;background:#f5f5f5;border-bottom:1px solid #777;border-right:1px solid #777"></div>
<div style="position:absolute;left:53px;top:701.67px;height:12.2px;line-height:12.2px;font-size:12.2px;font-family:'Liberation Sans', sans-serif;color:#000;font-weight:normal;white-space:pre;">5</div>
<div style="position:absolute;left:79px;top:718px;width:1327px;height:21px;background:#ffffff"></div>
<div style="position:absolute;left:1406px;top:738px;width:151px;height:1px;background:#f0f0f0"></div>
<div style="position:absolute;left:49px;top:718px;width:30px;height:21px;background:#f5f5f5;border-bottom:1px solid #777;border-right:1px solid #777"></div>
<div style="position:absolute;left:53px;top:722.67px;height:12.2px;line-height:12.2px;font-size:12.2px;font-family:'Liberation Sans', sans-serif;color:#000;font-weight:normal;white-space:pre;">6</div>
<div style="position:absolute;left:79px;top:739px;width:1327px;height:21px;background:#e0ebf7"></div>
<div style="position:absolute;left:1406px;top:759px;width:151px;height:1px;background:#f0f0f0"></div>
<div style="position:absolute;left:49px;top:739px;width:30px;height:21px;background:#f5f5f5;border-bottom:1px solid #777;border-right:1px solid #777"></div>
<div style="position:absolute;left:53px;top:743.67px;height:12.2px;line-height:12.2px;font-size:12.2px;font-family:'Liberation Sans', sans-serif;color:#000;font-weight:normal;white-space:pre;">7</div>
<div style="position:absolute;left:79px;top:760px;width:1327px;height:21px;background:#ffffff"></div>
<div style="position:absolute;left:1406px;top:780px;width:151px;height:1px;background:#f0f0f0"></div>
<div style="position:absolute;left:49px;top:760px;width:30px;height:21px;background:#f5f5f5;border-bottom:1px solid #777;border-right:1px solid #777"></div>
<div style="position:absolute;left:53px;top:764.67px;height:12.2px;line-height:12.2px;font-size:12.2px;font-family:'Liberation Sans', sans-serif;color:#000;font-weight:normal;white-space:pre;">8</div>
<div style="position:absolute;left:79px;top:781px;width:1327px;height:21px;background:#e0ebf7"></div>
<div style="position:absolute;left:1406px;top:801px;width:151px;height:1px;background:#f0f0f0"></div>
<div style="position:absolute;left:49px;top:781px;width:30px;height:21px;background:#f5f5f5;border-bottom:1px solid #777;border-right:1px solid #777"></div>
<div style="position:absolute;left:53px;top:785.67px;height:12.2px;line-height:12.2px;font-size:12.2px;font-family:'Liberation Sans', sans-serif;color:#000;font-weight:normal;white-space:pre;">9</div>
<div style="position:absolute;left:49px;top:612px;width:1357px;height:1px;background:#6e6e6e"></div>
<div style="position:absolute;left:79px;top:584px;width:87px;height:28px;background:#7ab9ea"></div>
<div style="position:absolute;left:166px;top:584px;width:1px;height:28px;background:#6e6e6e"></div>
<svg style="position:absolute;left:85px;top:594px;" width="17" height="7" viewBox="0 0 17 7"><g fill="#1a8ad4" shape-rendering="crispEdges"><rect x="1" y="0" width="1" height="1"/><rect x="2" y="0" width="1" height="1"/><rect x="3" y="0" width="1" height="1"/><rect x="0" y="1" width="1" height="1"/><rect x="1" y="1" width="1" height="1"/><rect x="3" y="1" width="1" height="1"/><rect x="4" y="1" width="1" height="1"/><rect x="0" y="2" width="1" height="1"/><rect x="1" y="2" width="1" height="1"/><rect x="3" y="2" width="1" height="1"/><rect x="4" y="2" width="1" height="1"/><rect x="0" y="3" width="1" height="1"/><rect x="1" y="3" width="1" height="1"/><rect x="2" y="3" width="1" height="1"/><rect x="3" y="3" width="1" height="1"/><rect x="4" y="3" width="1" height="1"/><rect x="0" y="4" width="1" height="1"/><rect x="1" y="4" width="1" height="1"/><rect x="3" y="4" width="1" height="1"/><rect x="4" y="4" width="1" height="1"/><rect x="0" y="5" width="1" height="1"/><rect x="1" y="5" width="1" height="1"/><rect x="3" y="5" width="1" height="1"/><rect x="4" y="5" width="1" height="1"/><rect x="0" y="6" width="1" height="1"/><rect x="1" y="6" width="1" height="1"/><rect x="3" y="6" width="1" height="1"/><rect x="4" y="6" width="1" height="1"/><rect x="6" y="0" width="1" height="1"/><rect x="7" y="0" width="1" height="1"/><rect x="8" y="0" width="1" height="1"/><rect x="9" y="0" width="1" height="1"/><rect x="6" y="1" width="1" height="1"/><rect x="7" y="1" width="1" height="1"/><rect x="9" y="1" width="1" height="1"/><rect x="6" y="2" width="1" height="1"/><rect x="7" y="2" width="1" height="1"/><rect x="8" y="2" width="1" height="1"/><rect x="9" y="2" width="1" height="1"/><rect x="6" y="3" width="1" height="1"/><rect x="7" y="3" width="1" height="1"/><rect x="9" y="3" width="1" height="1"/><rect x="6" y="4" width="1" height="1"/><rect x="7" y="4" width="1" height="1"/><rect x="9" y="4" width="1" height="1"/><rect x="6" y="5" width="1" height="1"/><rect x="7" y="5" width="1" height="1"/><rect x="8" y="5" width="1" height="1"/><rect x="9" y="5" width="1" height="1"/><rect x="6" y="6" width="1" height="1"/><rect x="7" y="6" width="1" height="1"/><rect x="8" y="6" width="1" height="1"/><rect x="9" y="6" width="1" height="1"/><rect x="12" y="0" width="1" height="1"/><rect x="13" y="0" width="1" height="1"/><rect x="14" y="0" width="1" height="1"/><rect x="15" y="0" width="1" height="1"/><rect x="11" y="1" width="1" height="1"/><rect x="12" y="1" width="1" height="1"/><rect x="15" y="1" width="1" height="1"/><rect x="11" y="2" width="1" height="1"/><rect x="12" y="2" width="1" height="1"/><rect x="11" y="3" width="1" height="1"/><rect x="12" y="3" width="1" height="1"/><rect x="11" y="4" width="1" height="1"/><rect x="12" y="4" width="1" height="1"/><rect x="11" y="5" width="1" height="1"/><rect x="12" y="5" width="1" height="1"/><rect x="15" y="5" width="1" height="1"/><rect x="12" y="6" width="1" height="1"/><rect x="13" y="6" width="1" height="1"/><rect x="14" y="6" width="1" height="1"/><rect x="15" y="6" width="1" height="1"/></g></svg>
<div style="position:absolute;left:104px;top:592.67px;height:12.2px;line-height:12.2px;font-size:12.2px;font-family:'Liberation Sans', sans-serif;color:#000;font-weight:normal;white-space:pre;"><span style="display:inline-block;width:12px;text-align:center">年</span><span style="display:inline-block;width:12px;text-align:center">份</span></div>
<svg style="position:absolute;left:151px;top:595px;" width="11" height="6" viewBox="0 0 11 6"><path d="M0 0 H11 L5.5 6Z" fill="#1a8ad4"/></svg>
<div style="position:absolute;left:278px;top:584px;width:1px;height:28px;background:#6e6e6e"></div>
<svg style="position:absolute;left:173px;top:594px;" width="17" height="7" viewBox="0 0 17 7"><g fill="#1a8ad4" shape-rendering="crispEdges"><rect x="1" y="0" width="1" height="1"/><rect x="2" y="0" width="1" height="1"/><rect x="3" y="0" width="1" height="1"/><rect x="0" y="1" width="1" height="1"/><rect x="1" y="1" width="1" height="1"/><rect x="3" y="1" width="1" height="1"/><rect x="4" y="1" width="1" height="1"/><rect x="0" y="2" width="1" height="1"/><rect x="1" y="2" width="1" height="1"/><rect x="3" y="2" width="1" height="1"/><rect x="4" y="2" width="1" height="1"/><rect x="0" y="3" width="1" height="1"/><rect x="1" y="3" width="1" height="1"/><rect x="2" y="3" width="1" height="1"/><rect x="3" y="3" width="1" height="1"/><rect x="4" y="3" width="1" height="1"/><rect x="0" y="4" width="1" height="1"/><rect x="1" y="4" width="1" height="1"/><rect x="3" y="4" width="1" height="1"/><rect x="4" y="4" width="1" height="1"/><rect x="0" y="5" width="1" height="1"/><rect x="1" y="5" width="1" height="1"/><rect x="3" y="5" width="1" height="1"/><rect x="4" y="5" width="1" height="1"/><rect x="0" y="6" width="1" height="1"/><rect x="1" y="6" width="1" height="1"/><rect x="3" y="6" width="1" height="1"/><rect x="4" y="6" width="1" height="1"/><rect x="6" y="0" width="1" height="1"/><rect x="7" y="0" width="1" height="1"/><rect x="8" y="0" width="1" height="1"/><rect x="9" y="0" width="1" height="1"/><rect x="6" y="1" width="1" height="1"/><rect x="7" y="1" width="1" height="1"/><rect x="9" y="1" width="1" height="1"/><rect x="6" y="2" width="1" height="1"/><rect x="7" y="2" width="1" height="1"/><rect x="8" y="2" width="1" height="1"/><rect x="9" y="2" width="1" height="1"/><rect x="6" y="3" width="1" height="1"/><rect x="7" y="3" width="1" height="1"/><rect x="9" y="3" width="1" height="1"/><rect x="6" y="4" width="1" height="1"/><rect x="7" y="4" width="1" height="1"/><rect x="9" y="4" width="1" height="1"/><rect x="6" y="5" width="1" height="1"/><rect x="7" y="5" width="1" height="1"/><rect x="8" y="5" width="1" height="1"/><rect x="9" y="5" width="1" height="1"/><rect x="6" y="6" width="1" height="1"/><rect x="7" y="6" width="1" height="1"/><rect x="8" y="6" width="1" height="1"/><rect x="9" y="6" width="1" height="1"/><rect x="12" y="0" width="1" height="1"/><rect x="13" y="0" width="1" height="1"/><rect x="14" y="0" width="1" height="1"/><rect x="15" y="0" width="1" height="1"/><rect x="11" y="1" width="1" height="1"/><rect x="12" y="1" width="1" height="1"/><rect x="15" y="1" width="1" height="1"/><rect x="11" y="2" width="1" height="1"/><rect x="12" y="2" width="1" height="1"/><rect x="11" y="3" width="1" height="1"/><rect x="12" y="3" width="1" height="1"/><rect x="11" y="4" width="1" height="1"/><rect x="12" y="4" width="1" height="1"/><rect x="11" y="5" width="1" height="1"/><rect x="12" y="5" width="1" height="1"/><rect x="15" y="5" width="1" height="1"/><rect x="12" y="6" width="1" height="1"/><rect x="13" y="6" width="1" height="1"/><rect x="14" y="6" width="1" height="1"/><rect x="15" y="6" width="1" height="1"/></g></svg>
<div style="position:absolute;left:192px;top:592.67px;height:12.2px;line-height:12.2px;font-size:12.2px;font-family:'Liberation Sans', sans-serif;color:#000;font-weight:normal;white-space:pre;"><span style="display:inline-block;width:12px;text-align:center">店</span><span style="display:inline-block;width:12px;text-align:center">铺</span><span style="display:inline-block;width:12px;text-align:center">编</span><span style="display:inline-block;width:12px;text-align:center">码</span></div>
<svg style="position:absolute;left:263px;top:595px;" width="11" height="6" viewBox="0 0 11 6"><path d="M0 0 H11 L5.5 6Z" fill="#1a8ad4"/></svg>
<div style="position:absolute;left:458px;top:584px;width:1px;height:28px;background:#6e6e6e"></div>
<svg style="position:absolute;left:285px;top:594px;" width="17" height="7" viewBox="0 0 17 7"><g fill="#1a8ad4" shape-rendering="crispEdges"><rect x="1" y="0" width="1" height="1"/><rect x="2" y="0" width="1" height="1"/><rect x="3" y="0" width="1" height="1"/><rect x="0" y="1" width="1" height="1"/><rect x="1" y="1" width="1" height="1"/><rect x="3" y="1" width="1" height="1"/><rect x="4" y="1" width="1" height="1"/><rect x="0" y="2" width="1" height="1"/><rect x="1" y="2" width="1" height="1"/><rect x="3" y="2" width="1" height="1"/><rect x="4" y="2" width="1" height="1"/><rect x="0" y="3" width="1" height="1"/><rect x="1" y="3" width="1" height="1"/><rect x="2" y="3" width="1" height="1"/><rect x="3" y="3" width="1" height="1"/><rect x="4" y="3" width="1" height="1"/><rect x="0" y="4" width="1" height="1"/><rect x="1" y="4" width="1" height="1"/><rect x="3" y="4" width="1" height="1"/><rect x="4" y="4" width="1" height="1"/><rect x="0" y="5" width="1" height="1"/><rect x="1" y="5" width="1" height="1"/><rect x="3" y="5" width="1" height="1"/><rect x="4" y="5" width="1" height="1"/><rect x="0" y="6" width="1" height="1"/><rect x="1" y="6" width="1" height="1"/><rect x="3" y="6" width="1" height="1"/><rect x="4" y="6" width="1" height="1"/><rect x="6" y="0" width="1" height="1"/><rect x="7" y="0" width="1" height="1"/><rect x="8" y="0" width="1" height="1"/><rect x="9" y="0" width="1" height="1"/><rect x="6" y="1" width="1" height="1"/><rect x="7" y="1" width="1" height="1"/><rect x="9" y="1" width="1" height="1"/><rect x="6" y="2" width="1" height="1"/><rect x="7" y="2" width="1" height="1"/><rect x="8" y="2" width="1" height="1"/><rect x="9" y="2" width="1" height="1"/><rect x="6" y="3" width="1" height="1"/><rect x="7" y="3" width="1" height="1"/><rect x="9" y="3" width="1" height="1"/><rect x="6" y="4" width="1" height="1"/><rect x="7" y="4" width="1" height="1"/><rect x="9" y="4" width="1" height="1"/><rect x="6" y="5" width="1" height="1"/><rect x="7" y="5" width="1" height="1"/><rect x="8" y="5" width="1" height="1"/><rect x="9" y="5" width="1" height="1"/><rect x="6" y="6" width="1" height="1"/><rect x="7" y="6" width="1" height="1"/><rect x="8" y="6" width="1" height="1"/><rect x="9" y="6" width="1" height="1"/><rect x="12" y="0" width="1" height="1"/><rect x="13" y="0" width="1" height="1"/><rect x="14" y="0" width="1" height="1"/><rect x="15" y="0" width="1" height="1"/><rect x="11" y="1" width="1" height="1"/><rect x="12" y="1" width="1" height="1"/><rect x="15" y="1" width="1" height="1"/><rect x="11" y="2" width="1" height="1"/><rect x="12" y="2" width="1" height="1"/><rect x="11" y="3" width="1" height="1"/><rect x="12" y="3" width="1" height="1"/><rect x="11" y="4" width="1" height="1"/><rect x="12" y="4" width="1" height="1"/><rect x="11" y="5" width="1" height="1"/><rect x="12" y="5" width="1" height="1"/><rect x="15" y="5" width="1" height="1"/><rect x="12" y="6" width="1" height="1"/><rect x="13" y="6" width="1" height="1"/><rect x="14" y="6" width="1" height="1"/><rect x="15" y="6" width="1" height="1"/></g></svg>
<div style="position:absolute;left:304px;top:592.67px;height:12.2px;line-height:12.2px;font-size:12.2px;font-family:'Liberation Sans', sans-serif;color:#000;font-weight:normal;white-space:pre;"><span style="display:inline-block;width:12px;text-align:center">店</span><span style="display:inline-block;width:12px;text-align:center">铺</span><span style="display:inline-block;width:12px;text-align:center">名</span><span style="display:inline-block;width:12px;text-align:center">称</span></div>
<svg style="position:absolute;left:443px;top:595px;" width="11" height="6" viewBox="0 0 11 6"><path d="M0 0 H11 L5.5 6Z" fill="#1a8ad4"/></svg>
<div style="position:absolute;left:606px;top:584px;width:1px;height:28px;background:#6e6e6e"></div>
<div style="position:absolute;left:465px;top:593.03px;height:10.6px;line-height:10.6px;font-size:10.6px;font-family:'Liberation Sans', sans-serif;color:#1a8ad4;font-weight:normal;white-space:pre;">123</div>
<div style="position:absolute;left:484px;top:592.67px;height:12.2px;line-height:12.2px;font-size:12.2px;font-family:'Liberation Sans', sans-serif;color:#000;font-weight:normal;white-space:pre;"><span style="display:inline-block;width:12px;text-align:center">销</span><span style="display:inline-block;width:12px;text-align:center">售</span><span style="display:inline-block;width:12px;text-align:center">金</span><span style="display:inline-block;width:12px;text-align:center">额</span><span style="display:inline-block;width:12px;text-align:center">（</span><span style="display:inline-block;width:12px;text-align:center">元</span><span style="display:inline-block;width:12px;text-align:center">）</span></div>
<svg style="position:absolute;left:591px;top:595px;" width="11" height="6" viewBox="0 0 11 6"><path d="M0 0 H11 L5.5 6Z" fill="#1a8ad4"/></svg>
<div style="position:absolute;left:754px;top:584px;width:1px;height:28px;background:#6e6e6e"></div>
<div style="position:absolute;left:613px;top:593.03px;height:10.6px;line-height:10.6px;font-size:10.6px;font-family:'Liberation Sans', sans-serif;color:#1a8ad4;font-weight:normal;white-space:pre;">123</div>
<div style="position:absolute;left:632px;top:592.67px;height:12.2px;line-height:12.2px;font-size:12.2px;font-family:'Liberation Sans', sans-serif;color:#000;font-weight:normal;white-space:pre;"><span style="display:inline-block;width:12px;text-align:center">运</span><span style="display:inline-block;width:12px;text-align:center">费</span><span style="display:inline-block;width:12px;text-align:center">金</span><span style="display:inline-block;width:12px;text-align:center">额</span><span style="display:inline-block;width:12px;text-align:center">（</span><span style="display:inline-block;width:12px;text-align:center">元</span><span style="display:inline-block;width:12px;text-align:center">）</span></div>
<svg style="position:absolute;left:739px;top:595px;" width="11" height="6" viewBox="0 0 11 6"><path d="M0 0 H11 L5.5 6Z" fill="#1a8ad4"/></svg>
<div style="position:absolute;left:902px;top:584px;width:1px;height:28px;background:#6e6e6e"></div>
<div style="position:absolute;left:761px;top:593.03px;height:10.6px;line-height:10.6px;font-size:10.6px;font-family:'Liberation Sans', sans-serif;color:#1a8ad4;font-weight:normal;white-space:pre;">123</div>
<div style="position:absolute;left:780px;top:592.67px;height:12.2px;line-height:12.2px;font-size:12.2px;font-family:'Liberation Sans', sans-serif;color:#000;font-weight:normal;white-space:pre;"><span style="display:inline-block;width:12px;text-align:center">退</span><span style="display:inline-block;width:12px;text-align:center">货</span><span style="display:inline-block;width:12px;text-align:center">金</span><span style="display:inline-block;width:12px;text-align:center">额</span><span style="display:inline-block;width:12px;text-align:center">（</span><span style="display:inline-block;width:12px;text-align:center">元</span><span style="display:inline-block;width:12px;text-align:center">）</span></div>
<svg style="position:absolute;left:887px;top:595px;" width="11" height="6" viewBox="0 0 11 6"><path d="M0 0 H11 L5.5 6Z" fill="#1a8ad4"/></svg>
<div style="position:absolute;left:1074px;top:584px;width:1px;height:28px;background:#6e6e6e"></div>
<div style="position:absolute;left:909px;top:593.03px;height:10.6px;line-height:10.6px;font-size:10.6px;font-family:'Liberation Sans', sans-serif;color:#1a8ad4;font-weight:normal;white-space:pre;">123</div>
<div style="position:absolute;left:928px;top:592.67px;height:12.2px;line-height:12.2px;font-size:12.2px;font-family:'Liberation Sans', sans-serif;color:#000;font-weight:normal;white-space:pre;"><span style="display:inline-block;width:12px;text-align:center">退</span><span style="display:inline-block;width:12px;text-align:center">货</span><span style="display:inline-block;width:12px;text-align:center">运</span><span style="display:inline-block;width:12px;text-align:center">费</span><span style="display:inline-block;width:12px;text-align:center">金</span><span style="display:inline-block;width:12px;text-align:center">额</span><span style="display:inline-block;width:12px;text-align:center">（</span><span style="display:inline-block;width:12px;text-align:center">元</span><span style="display:inline-block;width:12px;text-align:center">）</span></div>
<svg style="position:absolute;left:1059px;top:595px;" width="11" height="6" viewBox="0 0 11 6"><path d="M0 0 H11 L5.5 6Z" fill="#1a8ad4"/></svg>
<div style="position:absolute;left:1246px;top:584px;width:1px;height:28px;background:#6e6e6e"></div>
<div style="position:absolute;left:1081px;top:593.03px;height:10.6px;line-height:10.6px;font-size:10.6px;font-family:'Liberation Sans', sans-serif;color:#1a8ad4;font-weight:normal;white-space:pre;">123</div>
<div style="position:absolute;left:1100px;top:592.67px;height:12.2px;line-height:12.2px;font-size:12.2px;font-family:'Liberation Sans', sans-serif;color:#000;font-weight:normal;white-space:pre;"><span style="display:inline-block;width:12px;text-align:center">发</span><span style="display:inline-block;width:12px;text-align:center">货</span><span style="display:inline-block;width:12px;text-align:center">调</span><span style="display:inline-block;width:12px;text-align:center">整</span><span style="display:inline-block;width:12px;text-align:center">金</span><span style="display:inline-block;width:12px;text-align:center">额</span><span style="display:inline-block;width:12px;text-align:center">（</span><span style="display:inline-block;width:12px;text-align:center">元</span><span style="display:inline-block;width:12px;text-align:center">）</span></div>
<svg style="position:absolute;left:1231px;top:595px;" width="11" height="6" viewBox="0 0 11 6"><path d="M0 0 H11 L5.5 6Z" fill="#1a8ad4"/></svg>
<div style="position:absolute;left:1406px;top:584px;width:1px;height:28px;background:#6e6e6e"></div>
<div style="position:absolute;left:1253px;top:593.03px;height:10.6px;line-height:10.6px;font-size:10.6px;font-family:'Liberation Sans', sans-serif;color:#1a8ad4;font-weight:normal;white-space:pre;">123</div>
<div style="position:absolute;left:1272px;top:592.67px;height:12.2px;line-height:12.2px;font-size:12.2px;font-family:'Liberation Sans', sans-serif;color:#000;font-weight:normal;white-space:pre;"><span style="display:inline-block;width:12px;text-align:center">净</span><span style="display:inline-block;width:12px;text-align:center">销</span><span style="display:inline-block;width:12px;text-align:center">售</span><span style="display:inline-block;width:12px;text-align:center">金</span><span style="display:inline-block;width:12px;text-align:center">额</span><span style="display:inline-block;width:12px;text-align:center">（</span><span style="display:inline-block;width:12px;text-align:center">元</span><span style="display:inline-block;width:12px;text-align:center">）</span></div>
<svg style="position:absolute;left:1391px;top:595px;" width="11" height="6" viewBox="0 0 11 6"><path d="M0 0 H11 L5.5 6Z" fill="#1a8ad4"/></svg>
<div style="position:absolute;left:78px;top:584px;width:1px;height:28px;background:#6e6e6e"></div>
<svg style="position:absolute;left:54px;top:587px;" width="7" height="9" viewBox="0 0 7 9"><path d="M1.5 4 V3 A2 2 0 0 1 5.5 3 V4" stroke="#f0b000" stroke-width="1.3" fill="none"/><rect x="0" y="4" width="7" height="5" fill="#f5b800"/></svg>
<div style="position:absolute;left:166px;top:613px;width:1px;height:189px;background:#f2f2f2"></div>
<div style="position:absolute;left:278px;top:613px;width:1px;height:189px;background:#f2f2f2"></div>
<div style="position:absolute;left:458px;top:613px;width:1px;height:189px;background:#f2f2f2"></div>
<div style="position:absolute;left:606px;top:613px;width:1px;height:189px;background:#f2f2f2"></div>
<div style="position:absolute;left:754px;top:613px;width:1px;height:189px;background:#f2f2f2"></div>
<div style="position:absolute;left:902px;top:613px;width:1px;height:189px;background:#f2f2f2"></div>
<div style="position:absolute;left:1074px;top:613px;width:1px;height:189px;background:#f2f2f2"></div>
<div style="position:absolute;left:1246px;top:613px;width:1px;height:189px;background:#f2f2f2"></div>
<div style="position:absolute;left:1406px;top:613px;width:1px;height:189px;background:#f2f2f2"></div>
<div style="position:absolute;left:79px;top:613px;width:87px;height:20px;background:#6aaee6;border:1px solid #000;box-shadow:inset 0 0 0 1px #80c4f4"></div>
<div style="position:absolute;left:84px;top:616.97px;height:12.2px;line-height:12.2px;font-size:12.2px;font-family:'Liberation Sans', sans-serif;color:#fff;font-weight:normal;white-space:pre;">2024</div>
<div style="position:absolute;left:172px;top:616.97px;height:12.2px;line-height:12.2px;font-size:12.2px;font-family:'Liberation Sans', sans-serif;color:#000;font-weight:normal;white-space:pre;">DHF3</div>
<div style="position:absolute;left:284px;top:616.97px;height:12.2px;line-height:12.2px;font-size:12.2px;font-family:'Liberation Sans', sans-serif;color:#000;font-weight:normal;white-space:pre;"><span style="display:inline-block;width:12px;text-align:center">海</span><span style="display:inline-block;width:12px;text-align:center">澜</span><span style="display:inline-block;width:12px;text-align:center">之</span><span style="display:inline-block;width:12px;text-align:center">家</span><span style="display:inline-block;width:12px;text-align:center">天</span><span style="display:inline-block;width:12px;text-align:center">猫</span><span style="display:inline-block;width:12px;text-align:center">官</span><span style="display:inline-block;width:12px;text-align:center">方</span><span style="display:inline-block;width:12px;text-align:center">旗</span><span style="display:inline-block;width:12px;text-align:center">舰</span><span style="display:inline-block;width:12px;text-align:center">店</span></div>
<div style="position:absolute;left:460px;width:140px;top:616.97px;height:12.2px;line-height:12.2px;font-size:12.2px;font-family:'Liberation Sans', sans-serif;color:#000;font-weight:normal;white-space:pre;text-align:right;">620,834,961.23</div>
<div style="position:absolute;left:608px;width:140px;top:616.97px;height:12.2px;line-height:12.2px;font-size:12.2px;font-family:'Liberation Sans', sans-serif;color:#000;font-weight:normal;white-space:pre;text-align:right;">0</div>
<div style="position:absolute;left:756px;width:140px;top:616.97px;height:12.2px;line-height:12.2px;font-size:12.2px;font-family:'Liberation Sans', sans-serif;color:#000;font-weight:normal;white-space:pre;text-align:right;">-149,470,726.05</div>
<div style="position:absolute;left:904px;width:164px;top:616.97px;height:12.2px;line-height:12.2px;font-size:12.2px;font-family:'Liberation Sans', sans-serif;color:#000;font-weight:normal;white-space:pre;text-align:right;">0</div>
<div style="position:absolute;left:1076px;width:164px;top:616.97px;height:12.2px;line-height:12.2px;font-size:12.2px;font-family:'Liberation Sans', sans-serif;color:#000;font-weight:normal;white-space:pre;text-align:right;">-1,009,958.87</div>
<div style="position:absolute;left:1248px;width:152px;top:616.97px;height:12.2px;line-height:12.2px;font-size:12.2px;font-family:'Liberation Sans', sans-serif;color:#000;font-weight:normal;white-space:pre;text-align:right;">470,354,276.31</div>
<div style="position:absolute;left:84px;top:637.97px;height:12.2px;line-height:12.2px;font-size:12.2px;font-family:'Liberation Sans', sans-serif;color:#000;font-weight:normal;white-space:pre;">2024</div>
<div style="position:absolute;left:172px;top:637.97px;height:12.2px;line-height:12.2px;font-size:12.2px;font-family:'Liberation Sans', sans-serif;color:#000;font-weight:normal;white-space:pre;">DHE9</div>
<div style="position:absolute;left:284px;top:637.97px;height:12.2px;line-height:12.2px;font-size:12.2px;font-family:'Liberation Sans', sans-serif;color:#000;font-weight:normal;white-space:pre;"><span style="display:inline-block;width:12px;text-align:center">海</span><span style="display:inline-block;width:12px;text-align:center">澜</span><span style="display:inline-block;width:12px;text-align:center">之</span><span style="display:inline-block;width:12px;text-align:center">家</span><span style="display:inline-block;width:12px;text-align:center">抖</span><span style="display:inline-block;width:12px;text-align:center">音</span><span style="display:inline-block;width:12px;text-align:center">官</span><span style="display:inline-block;width:12px;text-align:center">方</span><span style="display:inline-block;width:12px;text-align:center">旗</span><span style="display:inline-block;width:12px;text-align:center">舰</span><span style="display:inline-block;width:12px;text-align:center">店</span></div>
<div style="position:absolute;left:460px;width:140px;top:637.97px;height:12.2px;line-height:12.2px;font-size:12.2px;font-family:'Liberation Sans', sans-serif;color:#000;font-weight:normal;white-space:pre;text-align:right;">260,733,720.67</div>
<div style="position:absolute;left:608px;width:140px;top:637.97px;height:12.2px;line-height:12.2px;font-size:12.2px;font-family:'Liberation Sans', sans-serif;color:#000;font-weight:normal;white-space:pre;text-align:right;">0</div>
<div style="position:absolute;left:756px;width:140px;top:637.97px;height:12.2px;line-height:12.2px;font-size:12.2px;font-family:'Liberation Sans', sans-serif;color:#000;font-weight:normal;white-space:pre;text-align:right;">-54,979,823.88</div>
<div style="position:absolute;left:904px;width:164px;top:637.97px;height:12.2px;line-height:12.2px;font-size:12.2px;font-family:'Liberation Sans', sans-serif;color:#000;font-weight:normal;white-space:pre;text-align:right;">0</div>
<div style="position:absolute;left:1076px;width:164px;top:637.97px;height:12.2px;line-height:12.2px;font-size:12.2px;font-family:'Liberation Sans', sans-serif;color:#000;font-weight:normal;white-space:pre;text-align:right;">-1,733,077.58</div>
<div style="position:absolute;left:1248px;width:152px;top:637.97px;height:12.2px;line-height:12.2px;font-size:12.2px;font-family:'Liberation Sans', sans-serif;color:#000;font-weight:normal;white-space:pre;text-align:right;">204,020,819.21</div>
<div style="position:absolute;left:84px;top:658.97px;height:12.2px;line-height:12.2px;font-size:12.2px;font-family:'Liberation Sans', sans-serif;color:#000;font-weight:normal;white-space:pre;">2024</div>
<div style="position:absolute;left:172px;top:658.97px;height:12.2px;line-height:12.2px;font-size:12.2px;font-family:'Liberation Sans', sans-serif;color:#000;font-weight:normal;white-space:pre;">DHA5</div>
<div style="position:absolute;left:284px;top:658.97px;height:12.2px;line-height:12.2px;font-size:12.2px;font-family:'Liberation Sans', sans-serif;color:#000;font-weight:normal;white-space:pre;"><span style="display:inline-block;width:12px;text-align:center">海</span><span style="display:inline-block;width:12px;text-align:center">澜</span><span style="display:inline-block;width:12px;text-align:center">之</span><span style="display:inline-block;width:12px;text-align:center">家</span><span style="display:inline-block;width:12px;text-align:center">京</span><span style="display:inline-block;width:12px;text-align:center">东</span><span style="display:inline-block;width:12px;text-align:center">官</span><span style="display:inline-block;width:12px;text-align:center">方</span><span style="display:inline-block;width:12px;text-align:center">旗</span><span style="display:inline-block;width:12px;text-align:center">舰</span><span style="display:inline-block;width:12px;text-align:center">店</span></div>
<div style="position:absolute;left:460px;width:140px;top:658.97px;height:12.2px;line-height:12.2px;font-size:12.2px;font-family:'Liberation Sans', sans-serif;color:#000;font-weight:normal;white-space:pre;text-align:right;">164,035,937.47</div>
<div style="position:absolute;left:608px;width:140px;top:658.97px;height:12.2px;line-height:12.2px;font-size:12.2px;font-family:'Liberation Sans', sans-serif;color:#000;font-weight:normal;white-space:pre;text-align:right;">0</div>
<div style="position:absolute;left:756px;width:140px;top:658.97px;height:12.2px;line-height:12.2px;font-size:12.2px;font-family:'Liberation Sans', sans-serif;color:#000;font-weight:normal;white-space:pre;text-align:right;">-30,280,011.41</div>
<div style="position:absolute;left:904px;width:164px;top:658.97px;height:12.2px;line-height:12.2px;font-size:12.2px;font-family:'Liberation Sans', sans-serif;color:#000;font-weight:normal;white-space:pre;text-align:right;">0</div>
<div style="position:absolute;left:1076px;width:164px;top:658.97px;height:12.2px;line-height:12.2px;font-size:12.2px;font-family:'Liberation Sans', sans-serif;color:#000;font-weight:normal;white-space:pre;text-align:right;">-2,491,509.58</div>
<div style="position:absolute;left:1248px;width:152px;top:658.97px;height:12.2px;line-height:12.2px;font-size:12.2px;font-family:'Liberation Sans', sans-serif;color:#000;font-weight:normal;white-space:pre;text-align:right;">131,264,416.48</div>
<div style="position:absolute;left:84px;top:679.97px;height:12.2px;line-height:12.2px;font-size:12.2px;font-family:'Liberation Sans', sans-serif;color:#000;font-weight:normal;white-space:pre;">2024</div>
<div style="position:absolute;left:172px;top:679.97px;height:12.2px;line-height:12.2px;font-size:12.2px;font-family:'Liberation Sans', sans-serif;color:#000;font-weight:normal;white-space:pre;">DYB0</div>
<div style="position:absolute;left:284px;top:679.97px;height:12.2px;line-height:12.2px;font-size:12.2px;font-family:'Liberation Sans', sans-serif;color:#000;font-weight:normal;white-space:pre;"><span style="display:inline-block;width:12px;text-align:center">天</span><span style="display:inline-block;width:12px;text-align:center">猫</span>-<span style="display:inline-block;width:12px;text-align:center">英</span><span style="display:inline-block;width:12px;text-align:center">氏</span><span style="display:inline-block;width:12px;text-align:center">官</span><span style="display:inline-block;width:12px;text-align:center">方</span><span style="display:inline-block;width:12px;text-align:center">旗</span><span style="display:inline-block;width:12px;text-align:center">舰</span><span style="display:inline-block;width:12px;text-align:center">店</span></div>
<div style="position:absolute;left:460px;width:140px;top:679.97px;height:12.2px;line-height:12.2px;font-size:12.2px;font-family:'Liberation Sans', sans-serif;color:#000;font-weight:normal;white-space:pre;text-align:right;">99,790,762.79</div>
<div style="position:absolute;left:608px;width:140px;top:679.97px;height:12.2px;line-height:12.2px;font-size:12.2px;font-family:'Liberation Sans', sans-serif;color:#000;font-weight:normal;white-space:pre;text-align:right;">0</div>
<div style="position:absolute;left:756px;width:140px;top:679.97px;height:12.2px;line-height:12.2px;font-size:12.2px;font-family:'Liberation Sans', sans-serif;color:#000;font-weight:normal;white-space:pre;text-align:right;">-18,612,714.78</div>
<div style="position:absolute;left:904px;width:164px;top:679.97px;height:12.2px;line-height:12.2px;font-size:12.2px;font-family:'Liberation Sans', sans-serif;color:#000;font-weight:normal;white-space:pre;text-align:right;">0</div>
<div style="position:absolute;left:1076px;width:164px;top:679.97px;height:12.2px;line-height:12.2px;font-size:12.2px;font-family:'Liberation Sans', sans-serif;color:#000;font-weight:normal;white-space:pre;text-align:right;">-785,059.5</div>
<div style="position:absolute;left:1248px;width:152px;top:679.97px;height:12.2px;line-height:12.2px;font-size:12.2px;font-family:'Liberation Sans', sans-serif;color:#000;font-weight:normal;white-space:pre;text-align:right;">80,392,988.51</div>
<div style="position:absolute;left:84px;top:700.97px;height:12.2px;line-height:12.2px;font-size:12.2px;font-family:'Liberation Sans', sans-serif;color:#000;font-weight:normal;white-space:pre;">2024</div>
<div style="position:absolute;left:172px;top:700.97px;height:12.2px;line-height:12.2px;font-size:12.2px;font-family:'Liberation Sans', sans-serif;color:#000;font-weight:normal;white-space:pre;">DHRN</div>
<div style="position:absolute;left:284px;top:700.97px;height:12.2px;line-height:12.2px;font-size:12.2px;font-family:'Liberation Sans', sans-serif;color:#000;font-weight:normal;white-space:pre;"><span style="display:inline-block;width:12px;text-align:center">海</span><span style="display:inline-block;width:12px;text-align:center">澜</span><span style="display:inline-block;width:12px;text-align:center">之</span><span style="display:inline-block;width:12px;text-align:center">家</span><span style="display:inline-block;width:12px;text-align:center">得</span><span style="display:inline-block;width:12px;text-align:center">物</span><span style="display:inline-block;width:12px;text-align:center">旗</span><span style="display:inline-block;width:12px;text-align:center">舰</span><span style="display:inline-block;width:12px;text-align:center">店</span></div>
<div style="position:absolute;left:460px;width:140px;top:700.97px;height:12.2px;line-height:12.2px;font-size:12.2px;font-family:'Liberation Sans', sans-serif;color:#000;font-weight:normal;white-space:pre;text-align:right;">91,234,696.29</div>
<div style="position:absolute;left:608px;width:140px;top:700.97px;height:12.2px;line-height:12.2px;font-size:12.2px;font-family:'Liberation Sans', sans-serif;color:#000;font-weight:normal;white-space:pre;text-align:right;">0</div>
<div style="position:absolute;left:756px;width:140px;top:700.97px;height:12.2px;line-height:12.2px;font-size:12.2px;font-family:'Liberation Sans', sans-serif;color:#000;font-weight:normal;white-space:pre;text-align:right;">-14,059,702.7</div>
<div style="position:absolute;left:904px;width:164px;top:700.97px;height:12.2px;line-height:12.2px;font-size:12.2px;font-family:'Liberation Sans', sans-serif;color:#000;font-weight:normal;white-space:pre;text-align:right;">0</div>
<div style="position:absolute;left:1076px;width:164px;top:700.97px;height:12.2px;line-height:12.2px;font-size:12.2px;font-family:'Liberation Sans', sans-serif;color:#000;font-weight:normal;white-space:pre;text-align:right;">-2,161,850.64</div>
<div style="position:absolute;left:1248px;width:152px;top:700.97px;height:12.2px;line-height:12.2px;font-size:12.2px;font-family:'Liberation Sans', sans-serif;color:#000;font-weight:normal;white-space:pre;text-align:right;">75,013,142.95</div>
<div style="position:absolute;left:84px;top:721.97px;height:12.2px;line-height:12.2px;font-size:12.2px;font-family:'Liberation Sans', sans-serif;color:#000;font-weight:normal;white-space:pre;">2024</div>
<div style="position:absolute;left:172px;top:721.97px;height:12.2px;line-height:12.2px;font-size:12.2px;font-family:'Liberation Sans', sans-serif;color:#000;font-weight:normal;white-space:pre;">DHFS</div>
<div style="position:absolute;left:284px;top:721.97px;height:12.2px;line-height:12.2px;font-size:12.2px;font-family:'Liberation Sans', sans-serif;color:#000;font-weight:normal;white-space:pre;"><span style="display:inline-block;width:12px;text-align:center">海</span><span style="display:inline-block;width:12px;text-align:center">澜</span><span style="display:inline-block;width:12px;text-align:center">之</span><span style="display:inline-block;width:12px;text-align:center">家</span><span style="display:inline-block;width:12px;text-align:center">抖</span><span style="display:inline-block;width:12px;text-align:center">音</span><span style="display:inline-block;width:12px;text-align:center">六</span><span style="display:inline-block;width:12px;text-align:center">十</span><span style="display:inline-block;width:12px;text-align:center">六</span><span style="display:inline-block;width:12px;text-align:center">号</span><span style="display:inline-block;width:12px;text-align:center">店</span></div>
<div style="position:absolute;left:460px;width:140px;top:721.97px;height:12.2px;line-height:12.2px;font-size:12.2px;font-family:'Liberation Sans', sans-serif;color:#000;font-weight:normal;white-space:pre;text-align:right;">61,855,797</div>
<div style="position:absolute;left:608px;width:140px;top:721.97px;height:12.2px;line-height:12.2px;font-size:12.2px;font-family:'Liberation Sans', sans-serif;color:#000;font-weight:normal;white-space:pre;text-align:right;">0</div>
<div style="position:absolute;left:756px;width:140px;top:721.97px;height:12.2px;line-height:12.2px;font-size:12.2px;font-family:'Liberation Sans', sans-serif;color:#000;font-weight:normal;white-space:pre;text-align:right;">-9,042,023.79</div>
<div style="position:absolute;left:904px;width:164px;top:721.97px;height:12.2px;line-height:12.2px;font-size:12.2px;font-family:'Liberation Sans', sans-serif;color:#000;font-weight:normal;white-space:pre;text-align:right;">0</div>
<div style="position:absolute;left:1076px;width:164px;top:721.97px;height:12.2px;line-height:12.2px;font-size:12.2px;font-family:'Liberation Sans', sans-serif;color:#000;font-weight:normal;white-space:pre;text-align:right;">-29,807.3</div>
<div style="position:absolute;left:1248px;width:152px;top:721.97px;height:12.2px;line-height:12.2px;font-size:12.2px;font-family:'Liberation Sans', sans-serif;color:#000;font-weight:normal;white-space:pre;text-align:right;">52,783,965.91</div>
<div style="position:absolute;left:84px;top:742.97px;height:12.2px;line-height:12.2px;font-size:12.2px;font-family:'Liberation Sans', sans-serif;color:#000;font-weight:normal;white-space:pre;">2024</div>
<div style="position:absolute;left:172px;top:742.97px;height:12.2px;line-height:12.2px;font-size:12.2px;font-family:'Liberation Sans', sans-serif;color:#000;font-weight:normal;white-space:pre;">DHK9</div>
<div style="position:absolute;left:284px;top:742.97px;height:12.2px;line-height:12.2px;font-size:12.2px;font-family:'Liberation Sans', sans-serif;color:#000;font-weight:normal;white-space:pre;"><span style="display:inline-block;width:12px;text-align:center">海</span><span style="display:inline-block;width:12px;text-align:center">澜</span><span style="display:inline-block;width:12px;text-align:center">之</span><span style="display:inline-block;width:12px;text-align:center">家</span><span style="display:inline-block;width:12px;text-align:center">抖</span><span style="display:inline-block;width:12px;text-align:center">音</span><span style="display:inline-block;width:12px;text-align:center">男</span><span style="display:inline-block;width:12px;text-align:center">子</span><span style="display:inline-block;width:12px;text-align:center">旗</span><span style="display:inline-block;width:12px;text-align:center">舰</span><span style="display:inline-block;width:12px;text-align:center">店</span></div>
<div style="position:absolute;left:460px;width:140px;top:742.97px;height:12.2px;line-height:12.2px;font-size:12.2px;font-family:'Liberation Sans', sans-serif;color:#000;font-weight:normal;white-space:pre;text-align:right;">47,450,900.67</div>
<div style="position:absolute;left:608px;width:140px;top:742.97px;height:12.2px;line-height:12.2px;font-size:12.2px;font-family:'Liberation Sans', sans-serif;color:#000;font-weight:normal;white-space:pre;text-align:right;">0</div>
<div style="position:absolute;left:756px;width:140px;top:742.97px;height:12.2px;line-height:12.2px;font-size:12.2px;font-family:'Liberation Sans', sans-serif;color:#000;font-weight:normal;white-space:pre;text-align:right;">-6,347,394.01</div>
<div style="position:absolute;left:904px;width:164px;top:742.97px;height:12.2px;line-height:12.2px;font-size:12.2px;font-family:'Liberation Sans', sans-serif;color:#000;font-weight:normal;white-space:pre;text-align:right;">0</div>
<div style="position:absolute;left:1076px;width:164px;top:742.97px;height:12.2px;line-height:12.2px;font-size:12.2px;font-family:'Liberation Sans', sans-serif;color:#000;font-weight:normal;white-space:pre;text-align:right;">-12,668.66</div>
<div style="position:absolute;left:1248px;width:152px;top:742.97px;height:12.2px;line-height:12.2px;font-size:12.2px;font-family:'Liberation Sans', sans-serif;color:#000;font-weight:normal;white-space:pre;text-align:right;">41,090,838</div>
<div style="position:absolute;left:84px;top:763.97px;height:12.2px;line-height:12.2px;font-size:12.2px;font-family:'Liberation Sans', sans-serif;color:#000;font-weight:normal;white-space:pre;">2024</div>
<div style="position:absolute;left:172px;top:763.97px;height:12.2px;line-height:12.2px;font-size:12.2px;font-family:'Liberation Sans', sans-serif;color:#000;font-weight:normal;white-space:pre;">DHU1</div>
<div style="position:absolute;left:284px;top:763.97px;height:12.2px;line-height:12.2px;font-size:12.2px;font-family:'Liberation Sans', sans-serif;color:#000;font-weight:normal;white-space:pre;"><span style="display:inline-block;width:12px;text-align:center">海</span><span style="display:inline-block;width:12px;text-align:center">澜</span><span style="display:inline-block;width:12px;text-align:center">之</span><span style="display:inline-block;width:12px;text-align:center">家</span><span style="display:inline-block;width:12px;text-align:center">快</span><span style="display:inline-block;width:12px;text-align:center">手</span><span style="display:inline-block;width:12px;text-align:center">恒</span><span style="display:inline-block;width:12px;text-align:center">越</span><span style="display:inline-block;width:12px;text-align:center">二</span><span style="display:inline-block;width:12px;text-align:center">十</span><span style="display:inline-block;width:12px;text-align:center">四</span><span style="display:inline-block;width:12px;text-align:center">专</span><span style="display:inline-block;width:12px;text-align:center">卖</span><span style="display:inline-block;width:12px;text-align:center">店</span></div>
<div style="position:absolute;left:460px;width:140px;top:763.97px;height:12.2px;line-height:12.2px;font-size:12.2px;font-family:'Liberation Sans', sans-serif;color:#000;font-weight:normal;white-space:pre;text-align:right;">50,110,805.07</div>
<div style="position:absolute;left:608px;width:140px;top:763.97px;height:12.2px;line-height:12.2px;font-size:12.2px;font-family:'Liberation Sans', sans-serif;color:#000;font-weight:normal;white-space:pre;text-align:right;">0</div>
<div style="position:absolute;left:756px;width:140px;top:763.97px;height:12.2px;line-height:12.2px;font-size:12.2px;font-family:'Liberation Sans', sans-serif;color:#000;font-weight:normal;white-space:pre;text-align:right;">-13,589,489.93</div>
<div style="position:absolute;left:904px;width:164px;top:763.97px;height:12.2px;line-height:12.2px;font-size:12.2px;font-family:'Liberation Sans', sans-serif;color:#000;font-weight:normal;white-space:pre;text-align:right;">0</div>
<div style="position:absolute;left:1076px;width:164px;top:763.97px;height:12.2px;line-height:12.2px;font-size:12.2px;font-family:'Liberation Sans', sans-serif;color:#000;font-weight:normal;white-space:pre;text-align:right;">-32,734.43</div>
<div style="position:absolute;left:1248px;width:152px;top:763.97px;height:12.2px;line-height:12.2px;font-size:12.2px;font-family:'Liberation Sans', sans-serif;color:#000;font-weight:normal;white-space:pre;text-align:right;">36,488,580.71</div>
<div style="position:absolute;left:84px;top:784.97px;height:12.2px;line-height:12.2px;font-size:12.2px;font-family:'Liberation Sans', sans-serif;color:#000;font-weight:normal;white-space:pre;">2024</div>
<div style="position:absolute;left:172px;top:784.97px;height:12.2px;line-height:12.2px;font-size:12.2px;font-family:'Liberation Sans', sans-serif;color:#000;font-weight:normal;white-space:pre;">DHB6</div>
<div style="position:absolute;left:284px;top:784.97px;height:12.2px;line-height:12.2px;font-size:12.2px;font-family:'Liberation Sans', sans-serif;color:#000;font-weight:normal;white-space:pre;"><span style="display:inline-block;width:12px;text-align:center">海</span><span style="display:inline-block;width:12px;text-align:center">澜</span><span style="display:inline-block;width:12px;text-align:center">之</span><span style="display:inline-block;width:12px;text-align:center">家</span><span style="display:inline-block;width:12px;text-align:center">美</span><span style="display:inline-block;width:12px;text-align:center">团</span><span style="display:inline-block;width:12px;text-align:center">店</span></div>
<div style="position:absolute;left:460px;width:140px;top:784.97px;height:12.2px;line-height:12.2px;font-size:12.2px;font-family:'Liberation Sans', sans-serif;color:#000;font-weight:normal;white-space:pre;text-align:right;">33,040,837.56</div>
<div style="position:absolute;left:608px;width:140px;top:784.97px;height:12.2px;line-height:12.2px;font-size:12.2px;font-family:'Liberation Sans', sans-serif;color:#000;font-weight:normal;white-space:pre;text-align:right;">0</div>
<div style="position:absolute;left:756px;width:140px;top:784.97px;height:12.2px;line-height:12.2px;font-size:12.2px;font-family:'Liberation Sans', sans-serif;color:#000;font-weight:normal;white-space:pre;text-align:right;">-1,567,289.52</div>
<div style="position:absolute;left:904px;width:164px;top:784.97px;height:12.2px;line-height:12.2px;font-size:12.2px;font-family:'Liberation Sans', sans-serif;color:#000;font-weight:normal;white-space:pre;text-align:right;">0</div>
<div style="position:absolute;left:1076px;width:164px;top:784.97px;height:12.2px;line-height:12.2px;font-size:12.2px;font-family:'Liberation Sans', sans-serif;color:#000;font-weight:normal;white-space:pre;text-align:right;">47,186.34</div>
<div style="position:absolute;left:1248px;width:152px;top:784.97px;height:12.2px;line-height:12.2px;font-size:12.2px;font-family:'Liberation Sans', sans-serif;color:#000;font-weight:normal;white-space:pre;text-align:right;">31,520,734.38</div>
<svg style="position:absolute;left:1559px;top:589px;" width="12" height="7" viewBox="0 0 12 7"><path d="M1 6 L6 1 L11 6" stroke="#333" stroke-width="1.5" fill="none"/></svg>
<div style="position:absolute;left:1558px;top:601px;width:15px;height:17px;background:#cdcdcd"></div>
<svg style="position:absolute;left:1559px;top:789px;" width="12" height="7" viewBox="0 0 12 7"><path d="M1 1 L6 6 L11 1" stroke="#333" stroke-width="1.5" fill="none"/></svg>
<svg style="position:absolute;left:1580px;top:592px;" width="15" height="15" viewBox="0 0 15 15"><rect x="1" y="1" width="13" height="13" fill="none" stroke="#1a8ad4" stroke-width="1.5"/><rect x="7" y="1" width="7" height="9" fill="#5ec0f0"/><circle cx="4" cy="11" r="2.5" fill="#1a8ad4"/></svg>
<div style="position:absolute;left:1578px;top:606px;width:18px;height:28px;"><div style="position:absolute;left:50%;top:50%;transform:translate(-50%,-50%) rotate(90deg);font-size:12.5px;line-height:14px;white-space:nowrap;color:#000;font-family:'Liberation Sans', sans-serif"><span style="display:inline-block;width:12px;text-align:center">面</span><span style="display:inline-block;width:12px;text-align:center">板</span></div></div>
<svg style="position:absolute;left:1578px;top:650px;" width="15" height="14" viewBox="0 0 15 14"><rect x="0.5" y="0.5" width="14" height="13" fill="#fff" stroke="#1a8ad4"/><path d="M0 3 H15" stroke="#1a8ad4" stroke-width="2"/><path d="M2 6 h2 M6 6 h2 M10 6 h2 M4 8 h2 M8 8 h2 M2 10 h2 M6 10 h2 M10 10 h2" stroke="#1a8ad4"/></svg>
<svg style="position:absolute;left:1578px;top:672px;" width="15" height="15" viewBox="0 0 15 15"><circle cx="7.5" cy="7.5" r="6.5" fill="none" stroke="#1a8ad4" stroke-width="1.3"/><circle cx="5" cy="5.5" r="1.2" fill="#1a8ad4"/><circle cx="10" cy="5.5" r="1.2" fill="#1a8ad4"/><circle cx="5" cy="9.5" r="1.2" fill="#1a8ad4"/><circle cx="10" cy="9.5" r="1.2" fill="#1a8ad4"/></svg>
<svg style="position:absolute;left:1578px;top:694px;" width="15" height="15" viewBox="0 0 15 15"><rect x="0.5" y="4.5" width="14" height="10" fill="none" stroke="#1a8ad4"/><path d="M0 7 H15 M0 10 H15 M5 4 V15 M10 4 V15" stroke="#1a8ad4"/><path d="M7.5 0 V4" stroke="#f08000" stroke-width="1.5"/></svg>
<svg style="position:absolute;left:1578px;top:716px;" width="15" height="15" viewBox="0 0 15 15"><rect x="0.5" y="0.5" width="14" height="10" fill="none" stroke="#1a8ad4"/><rect x="2" y="3" width="8" height="3" fill="#1a8ad4"/><path d="M10 13 H15 M12.5 11 V15" stroke="#1a8ad4"/></svg>
<svg style="position:absolute;left:1578px;top:737px;" width="15" height="15" viewBox="0 0 15 15"><rect x="0.5" y="0.5" width="5" height="5" fill="none" stroke="#1a8ad4"/><circle cx="11.5" cy="3" r="2.5" fill="none" stroke="#1a8ad4"/><path d="M1 9 L5 13 M5 9 L1 13" stroke="#1a8ad4" stroke-width="1.2"/><rect x="8.5" y="8.5" width="6" height="5" fill="#f09000"/></svg>
<svg style="position:absolute;left:1579px;top:816px;" width="14" height="14" viewBox="0 0 14 14"><path d="M1 3 V13 H5" stroke="#1a8ad4" stroke-width="2" fill="none"/><path d="M7 6 A4 4 0 0 1 13 8 M13 11 H7" stroke="#1a8ad4" stroke-width="1.8" fill="none"/><path d="M6 2 L9 5 L6 8Z" fill="#1a8ad4"/></svg>
<div style="position:absolute;left:23px;top:801px;width:1535px;height:1px;background:#f5f5f5"></div>
<div style="position:absolute;left:23px;top:833px;width:1576px;height:1px;background:#d8d8d8"></div>
<div style="position:absolute;left:1599px;top:74px;width:1px;height:760px;background:#d8d8d8"></div>
<svg style="position:absolute;left:60px;top:809px;" width="15" height="15" viewBox="0 0 15 15"><path d="M2 6 A5.5 5.5 0 0 1 12 4 M13 9 A5.5 5.5 0 0 1 3 11" stroke="#1a8ad4" stroke-width="2" fill="none"/><path d="M10 1 L14 4 L10 6Z M5 14 L1 11 L5 9Z" fill="#1a8ad4"/><path d="M5 8 L7 6 L10 9" stroke="#1a8ad4" stroke-width="1.5" fill="none"/></svg>
<div style="position:absolute;left:79px;top:811.42px;height:12.5px;line-height:12.5px;font-size:12.5px;font-family:'Liberation Sans', sans-serif;color:#000;font-weight:normal;white-space:pre;"><span style="display:inline-block;width:12px;text-align:center">刷</span><span style="display:inline-block;width:12px;text-align:center">新</span></div>
<svg style="position:absolute;left:118px;top:816px;" width="8" height="5" viewBox="0 0 8 5"><path d="M0 0 H8 L4 4.5Z" fill="#333"/></svg>
<div style="position:absolute;left:135px;top:809px;width:2px;height:2px;background:#c4b8a0"></div>
<div style="position:absolute;left:135px;top:813px;width:2px;height:2px;background:#c4b8a0"></div>
<div style="position:absolute;left:135px;top:817px;width:2px;height:2px;background:#c4b8a0"></div>
<div style="position:absolute;left:135px;top:821px;width:2px;height:2px;background:#c4b8a0"></div>
<svg style="position:absolute;left:146px;top:810px;" width="15" height="15" viewBox="0 0 15 15"><circle cx="7.5" cy="7.5" r="6.5" stroke="#aaa" stroke-width="1.2" fill="none"/><path d="M4 7.5 L6.5 10 L11 5" stroke="#aaa" stroke-width="1.2" fill="none"/></svg>
<div style="position:absolute;left:166px;top:811.42px;height:12.5px;line-height:12.5px;font-size:12.5px;font-family:'Liberation Sans', sans-serif;color:#a0a0a0;font-weight:normal;white-space:pre;"><span style="display:inline-block;width:12px;text-align:center">保</span><span style="display:inline-block;width:12px;text-align:center">存</span></div>
<svg style="position:absolute;left:204px;top:816px;" width="8" height="5" viewBox="0 0 8 5"><path d="M0 0 H8 L4 4.5Z" fill="#666"/></svg>
<svg style="position:absolute;left:221px;top:811px;" width="13" height="13" viewBox="0 0 13 13"><rect x="0.5" y="0.5" width="12" height="12" fill="none" stroke="#aaa"/><path d="M3 3 L10 10 M10 3 L3 10" stroke="#aaa"/></svg>
<div style="position:absolute;left:239px;top:811.42px;height:12.5px;line-height:12.5px;font-size:12.5px;font-family:'Liberation Sans', sans-serif;color:#a0a0a0;font-weight:normal;white-space:pre;"><span style="display:inline-block;width:12px;text-align:center">取</span><span style="display:inline-block;width:12px;text-align:center">消</span></div>
<div style="position:absolute;left:273px;top:805px;width:1px;height:25px;background:#777"></div>
<svg style="position:absolute;left:284px;top:811px;" width="15" height="13" viewBox="0 0 15 13"><path d="M0 1 H12 M0 5 H10 M0 9 H6 M0 13 H5" stroke="#1a8ad4" stroke-width="1.6"/><path d="M8 12 L13 7" stroke="#1a8ad4" stroke-width="2"/></svg>
<svg style="position:absolute;left:308px;top:811px;" width="15" height="13" viewBox="0 0 15 13"><path d="M0 1 H14 M0 5 H8 M0 9 H6 M0 12.5 H6" stroke="#999" stroke-width="1.5"/><path d="M11 6 V13 M7.5 9.5 H14.5" stroke="#999" stroke-width="1.6"/></svg>
<svg style="position:absolute;left:332px;top:811px;" width="15" height="13" viewBox="0 0 15 13"><path d="M0 1 H14 M0 5 H3 M0 9 H3 M0 12.5 H6" stroke="#999" stroke-width="1.5"/><circle cx="10" cy="8.5" r="4" stroke="#999" fill="none"/><path d="M10 6.5 V10.5 M8 8.5 H12" stroke="#999"/></svg>
<svg style="position:absolute;left:356px;top:811px;" width="15" height="13" viewBox="0 0 15 13"><path d="M0 1 H14 M0 5 H6 M9 5 H14 M0 9 H6 M0 12.5 H14" stroke="#999" stroke-width="1.5"/></svg>
<div style="position:absolute;left:380px;top:809px;width:2px;height:2px;background:#c4b8a0"></div>
<div style="position:absolute;left:380px;top:813px;width:2px;height:2px;background:#c4b8a0"></div>
<div style="position:absolute;left:380px;top:817px;width:2px;height:2px;background:#c4b8a0"></div>
<div style="position:absolute;left:380px;top:821px;width:2px;height:2px;background:#c4b8a0"></div>
<svg style="position:absolute;left:387px;top:810px;" width="13" height="15" viewBox="0 0 13 15"><path d="M1.5 0 V15" stroke="#999" stroke-width="2"/><path d="M11 1 L5 7.5 L11 14" stroke="#999" stroke-width="2" fill="none"/></svg>
<svg style="position:absolute;left:412px;top:810px;" width="9" height="15" viewBox="0 0 9 15"><path d="M8 1 L2 7.5 L8 14" stroke="#999" stroke-width="2" fill="none"/></svg>
<svg style="position:absolute;left:436px;top:810px;" width="9" height="15" viewBox="0 0 9 15"><path d="M1 1 L7 7.5 L1 14" stroke="#1a8ad4" stroke-width="2" fill="none"/></svg>
<svg style="position:absolute;left:456px;top:810px;" width="13" height="15" viewBox="0 0 13 15"><path d="M11.5 0 V15" stroke="#1a8ad4" stroke-width="2"/><path d="M2 1 L8 7.5 L2 14" stroke="#1a8ad4" stroke-width="2" fill="none"/></svg>
<svg style="position:absolute;left:479px;top:810px;" width="15" height="15" viewBox="0 0 15 15"><path d="M1 4 V1 H4 M11 1 H14 V4 M14 11 V14 H11 M4 14 H1 V11" stroke="#1a8ad4" stroke-width="1.4" fill="none"/><rect x="4.5" y="4.5" width="6" height="6" fill="none" stroke="#1a8ad4" stroke-width="1.4"/></svg>
<div style="position:absolute;left:503px;top:809px;width:2px;height:2px;background:#c4b8a0"></div>
<div style="position:absolute;left:503px;top:813px;width:2px;height:2px;background:#c4b8a0"></div>
<div style="position:absolute;left:503px;top:817px;width:2px;height:2px;background:#c4b8a0"></div>
<div style="position:absolute;left:503px;top:821px;width:2px;height:2px;background:#c4b8a0"></div>
<svg style="position:absolute;left:517px;top:809px;" width="14" height="15" viewBox="0 0 14 15"><path d="M7 1 V11 M3 5 L7 1 L11 5 M1 9 V14 H13 V9" stroke="#1a8ad4" stroke-width="1.6" fill="none"/></svg>
<div style="position:absolute;left:536px;top:811.42px;height:12.5px;line-height:12.5px;font-size:12.5px;font-family:'Liberation Sans', sans-serif;color:#000;font-weight:normal;white-space:pre;"><span style="display:inline-block;width:12px;text-align:center">导</span><span style="display:inline-block;width:12px;text-align:center">出</span><span style="display:inline-block;width:12px;text-align:center">数</span><span style="display:inline-block;width:12px;text-align:center">据</span>...</div>
<svg style="position:absolute;left:607px;top:816px;" width="8" height="5" viewBox="0 0 8 5"><path d="M0 0 H8 L4 4.5Z" fill="#333"/></svg>
<div style="position:absolute;left:624px;top:809px;width:2px;height:2px;background:#c4b8a0"></div>
<div style="position:absolute;left:624px;top:813px;width:2px;height:2px;background:#c4b8a0"></div>
<div style="position:absolute;left:624px;top:817px;width:2px;height:2px;background:#c4b8a0"></div>
<div style="position:absolute;left:624px;top:821px;width:2px;height:2px;background:#c4b8a0"></div>
<svg style="position:absolute;left:631px;top:810px;" width="15" height="15" viewBox="0 0 15 15"><path d="M7.5 0 L9.5 2.5 L12.8 2.2 L12.5 5.5 L15 7.5 L12.5 9.5 L12.8 12.8 L9.5 12.5 L7.5 15 L5.5 12.5 L2.2 12.8 L2.5 9.5 L0 7.5 L2.5 5.5 L2.2 2.2 L5.5 2.5Z" fill="#1a8ad4"/><circle cx="7.5" cy="7.5" r="2.5" fill="#fff"/></svg>
<div style="position:absolute;left:654px;top:806px;width:54px;height:23px;background:#fff;border:1px solid #a8a8a8"></div>
<div style="position:absolute;left:658px;top:812.42px;height:12.5px;line-height:12.5px;font-size:12.5px;font-family:'Liberation Sans', sans-serif;color:#000;font-weight:normal;white-space:pre;">200</div>
<svg style="position:absolute;left:715px;top:809px;" width="15" height="15" viewBox="0 0 15 15"><path d="M1 1 L7.5 8 L14 1 M7.5 4 V11 M1 14 H14" stroke="#1a8ad4" stroke-width="1.6" fill="none"/></svg>
<div style="position:absolute;left:737px;top:811.42px;height:12.5px;line-height:12.5px;font-size:12.5px;font-family:'Liberation Sans', sans-serif;color:#000;font-weight:normal;white-space:pre;">827</div>
<div style="position:absolute;left:766px;top:809px;width:2px;height:2px;background:#c4b8a0"></div>
<div style="position:absolute;left:766px;top:813px;width:2px;height:2px;background:#c4b8a0"></div>
<div style="position:absolute;left:766px;top:817px;width:2px;height:2px;background:#c4b8a0"></div>
<div style="position:absolute;left:766px;top:821px;width:2px;height:2px;background:#c4b8a0"></div>
<div style="position:absolute;left:797px;top:811.53px;height:10px;line-height:10px;font-size:10px;font-family:'Liberation Sans', sans-serif;color:#666;font-weight:normal;white-space:pre;">···</div>
<div style="position:absolute;left:812px;top:811.42px;height:12.5px;line-height:12.5px;font-size:12.5px;font-family:'Liberation Sans', sans-serif;color:#000;font-weight:normal;white-space:pre;letter-spacing:0.15px">200 <span style="display:inline-block;width:12px;text-align:center">行</span><span style="display:inline-block;width:12px;text-align:center">已</span><span style="display:inline-block;width:12px;text-align:center">获</span><span style="display:inline-block;width:12px;text-align:center">取</span> - 8.622s (7ms <span style="display:inline-block;width:12px;text-align:center">获</span><span style="display:inline-block;width:12px;text-align:center">取</span>), 2025-10-21 20:07:48</div>
<div style="position:absolute;left:0px;top:834px;width:1600px;height:26px;background:#f5f5f5"></div>
<div style="position:absolute;left:778px;top:834px;width:1px;height:22px;background:#c8c8c8"></div>
<div style="position:absolute;left:814px;top:834px;width:1px;height:22px;background:#c8c8c8"></div>
<div style="position:absolute;left:841px;top:834px;width:1px;height:22px;background:#c8c8c8"></div>
<div style="position:absolute;left:975px;top:834px;width:1px;height:22px;background:#c8c8c8"></div>
<div style="position:absolute;left:1103px;top:834px;width:1px;height:22px;background:#c8c8c8"></div>
<div style="position:absolute;left:1230px;top:834px;width:1px;height:22px;background:#c8c8c8"></div>
<div style="position:absolute;left:786px;top:839.02px;height:12.5px;line-height:12.5px;font-size:12.5px;font-family:'Liberation Sans', sans-serif;color:#000;font-weight:normal;white-space:pre;">CST</div>
<div style="position:absolute;left:821px;top:839.02px;height:12.5px;line-height:12.5px;font-size:12.5px;font-family:'Liberation Sans', sans-serif;color:#000;font-weight:normal;white-space:pre;">zh</div>
<div style="position:absolute;left:849px;top:839.02px;height:12.5px;line-height:12.5px;font-size:12.5px;font-family:'Liberation Sans', sans-serif;color:#000;font-weight:normal;white-space:pre;"><span style="display:inline-block;width:12px;text-align:center">可</span><span style="display:inline-block;width:12px;text-align:center">写</span></div>
<div style="position:absolute;left:983px;top:839.02px;height:12.5px;line-height:12.5px;font-size:12.5px;font-family:'Liberation Sans', sans-serif;color:#000;font-weight:normal;white-space:pre;"><span style="display:inline-block;width:12px;text-align:center">智</span><span style="display:inline-block;width:12px;text-align:center">能</span><span style="display:inline-block;width:12px;text-align:center">插</span><span style="display:inline-block;width:12px;text-align:center">入</span></div>
<div style="position:absolute;left:1111px;top:839.02px;height:12.5px;line-height:12.5px;font-size:12.5px;font-family:'Liberation Sans', sans-serif;color:#000;font-weight:normal;white-space:pre;">239 : 1 : 9563</div>
<div style="position:absolute;left:1239px;top:839.02px;height:12.5px;line-height:12.5px;font-size:12.5px;font-family:'Liberation Sans', sans-serif;color:#000;font-weight:normal;white-space:pre;">Sel: 0 | 0</div>
<div style="position:absolute;left:1315px;top:840px;width:2px;height:2px;background:#c4b8a0"></div>
<div style="position:absolute;left:1315px;top:844px;width:2px;height:2px;background:#c4b8a0"></div>
<div style="position:absolute;left:1315px;top:848px;width:2px;height:2px;background:#c4b8a0"></div>
<div style="position:absolute;left:1315px;top:852px;width:2px;height:2px;background:#c4b8a0"></div>
<div style="position:absolute;left:0px;top:860px;width:1600px;height:40px;background:#000"></div>
<svg style="position:absolute;left:16px;top:872px;" width="17" height="17" viewBox="0 0 17 17"><path d="M0 2.3 L7 1.3 V8 H0Z M8 1.1 L17 0 V8 H8Z M0 9 H7 V15.7 L0 14.7Z M8 9 H17 V17 L8 15.9Z" fill="#fff"/></svg>
<svg style="position:absolute;left:63px;top:871px;" width="18" height="18" viewBox="0 0 18 18"><circle cx="11" cy="7" r="5.5" stroke="#fff" stroke-width="1.4" fill="none"/><path d="M7 11 L1 17" stroke="#fff" stroke-width="1.6"/></svg>
<svg style="position:absolute;left:111px;top:871px;" width="18" height="18" viewBox="0 0 18 18"><rect x="1.5" y="4.5" width="11" height="9" stroke="#fff" stroke-width="1.3" fill="none"/><path d="M1 1.5 H13 M1 16.5 H13 M16 1 V17" stroke="#fff" stroke-width="1.3"/><rect x="14.5" y="5" width="3" height="3" fill="#fff"/></svg>
<svg style="position:absolute;left:159px;top:867px;" width="26" height="26" viewBox="0 0 26 26"><path d="M4 14 Q4 5 13 5 Q21 5 21 14 H8 Q8 20 14 20 Q18 20 20 17 H24 Q21 24 13 24 Q4 24 4 14Z M8 11 H17 Q16 8 12.5 8 Q9 8 8 11Z" fill="#2a9de8"/><path d="M2 20 Q0 10 12 5 Q22 1 24 3 Q25 6 20 10" stroke="#f5c000" stroke-width="2" fill="none"/></svg>
<svg style="position:absolute;left:207px;top:869px;" width="24" height="21" viewBox="0 0 24 21"><path d="M1 3 H9 L11 5 H23 V20 H1Z" fill="#f0c040"/><path d="M1 8 H23 V20 H1Z" fill="#f8d060"/><rect x="9" y="13" width="7" height="7" fill="#2a8ee0"/></svg>
<div style="position:absolute;left:294px;top:860px;width:48px;height:40px;background:#333"></div>
<div style="position:absolute;left:294px;top:898px;width:48px;height:2px;background:#76b9ed"></div>
<svg style="position:absolute;left:256px;top:867px;" width="26" height="26" viewBox="0 0 26 26"><g transform="scale(1.000000)"><circle cx="13" cy="13" r="11.2" fill="#fff" stroke="#3cb4bc" stroke-width="2.2"/><path d="M5 13 Q5.5 9 8 8.5 L7.5 15 Z" fill="#3a2e2a"/><path d="M6.5 9 Q9.5 4.5 15.5 4.8" stroke="#3a2e2a" stroke-width="0.9" fill="none"/><ellipse cx="17.3" cy="8.6" rx="2.1" ry="1.4" fill="#3a2e2a"/><circle cx="11.5" cy="7.6" r="0.9" fill="#3a2e2a"/><path d="M8.5 21.5 L9.5 15.5 Q12 13 14 15.5 L15.2 13.5 Q15.5 16.5 18 15 L17.5 19 Q17 21 15.5 22.5 Q12 24 8.5 21.5Z" fill="#3a2e2a"/><rect x="15.3" y="16" width="1.6" height="2" fill="#fff"/></g></svg>
<svg style="position:absolute;left:305px;top:867px;" width="26" height="26" viewBox="0 0 26 26"><g transform="scale(1.000000)"><circle cx="13" cy="13" r="11.2" fill="#fff" stroke="#3cb4bc" stroke-width="2.2"/><path d="M5 13 Q5.5 9 8 8.5 L7.5 15 Z" fill="#3a2e2a"/><path d="M6.5 9 Q9.5 4.5 15.5 4.8" stroke="#3a2e2a" stroke-width="0.9" fill="none"/><ellipse cx="17.3" cy="8.6" rx="2.1" ry="1.4" fill="#3a2e2a"/><circle cx="11.5" cy="7.6" r="0.9" fill="#3a2e2a"/><path d="M8.5 21.5 L9.5 15.5 Q12 13 14 15.5 L15.2 13.5 Q15.5 16.5 18 15 L17.5 19 Q17 21 15.5 22.5 Q12 24 8.5 21.5Z" fill="#3a2e2a"/><rect x="15.3" y="16" width="1.6" height="2" fill="#fff"/></g></svg>
<svg style="position:absolute;left:1348px;top:874px;" width="13" height="8" viewBox="0 0 13 8"><path d="M1 7 L6.5 1.5 L12 7" stroke="#fff" stroke-width="1.3" fill="none"/></svg>
<svg style="position:absolute;left:1371px;top:870px;" width="12" height="18" viewBox="0 0 12 18"><path d="M3 1.5 H9 V6 H11 V13 Q11 16.5 6 16.5 Q1 16.5 1 13 V6 H3Z" stroke="#fff" stroke-width="1.2" fill="none"/></svg>
<svg style="position:absolute;left:1393px;top:870px;" width="17" height="17" viewBox="0 0 17 17"><rect x="1" y="1.5" width="15" height="10" stroke="#fff" stroke-width="1.2" fill="none"/><path d="M8.5 11.5 V15 M4 15.5 H13" stroke="#fff" stroke-width="1.2"/></svg>
<svg style="position:absolute;left:1417px;top:870px;" width="17" height="17" viewBox="0 0 17 17"><path d="M1 6 H4 L8 2 V15 L4 11 H1Z" stroke="#fff" stroke-width="1.2" fill="none"/><path d="M10.5 6 Q12 8.5 10.5 11 M12.5 4 Q15.5 8.5 12.5 13 M14.5 2 Q19 8.5 14.5 15" stroke="#fff" stroke-width="1.1" fill="none"/></svg>
<div style="position:absolute;left:1443px;top:874.42px;height:12.5px;line-height:12.5px;font-size:12.5px;font-family:'Liberation Sans', sans-serif;color:#fff;font-weight:normal;white-space:pre;">ENG</div>
<div style="position:absolute;left:1511px;top:866.42px;height:12.5px;line-height:12.5px;font-size:12.5px;font-family:'Liberation Sans', sans-serif;color:#fff;font-weight:normal;white-space:pre;transform:translateX(-50%)">20:08</div>
<div style="position:absolute;left:1510px;top:883.42px;height:12.5px;line-height:12.5px;font-size:12.5px;font-family:'Liberation Sans', sans-serif;color:#fff;font-weight:normal;white-space:pre;transform:translateX(-50%)">2025/10/21</div>
<svg style="position:absolute;left:1558px;top:871px;" width="18" height="18" viewBox="0 0 18 18"><path d="M1.5 1.5 H16.5 V13.5 H11 L9 15.5 L7 13.5 H1.5Z" stroke="#fff" stroke-width="1.3" fill="none"/></svg>
<div style="position:absolute;left:1596px;top:860px;width:1px;height:40px;background:#666"></div>
<div style="position:absolute;left:0;top:0;width:1600px;height:860px;overflow:hidden;pointer-events:none"><div style="position:absolute;left:-292px;top:-167px;width:300px;height:50px;transform:rotate(-44.3deg);text-align:center;font-size:21.3px;line-height:23px;color:#ebebeb;-webkit-text-stroke:0.3px #ebebeb;mix-blend-mode:multiply;font-family:'Liberation Sans', sans-serif;white-space:nowrap">audit<span style="display:inline-block;width:21px;text-align:center">审</span><span style="display:inline-block;width:21px;text-align:center">计</span>01(Audit1)<br>audit-172.18.210.237</div><div style="position:absolute;left:8px;top:-167px;width:300px;height:50px;transform:rotate(-44.3deg);text-align:center;font-size:21.3px;line-height:23px;color:#ebebeb;-webkit-text-stroke:0.3px #ebebeb;mix-blend-mode:multiply;font-family:'Liberation Sans', sans-serif;white-space:nowrap">audit<span style="display:inline-block;width:21px;text-align:center">审</span><span style="display:inline-block;width:21px;text-align:center">计</span>01(Audit1)<br>audit-172.18.210.237</div><div style="position:absolute;left:308px;top:-167px;width:300px;height:50px;transform:rotate(-44.3deg);text-align:center;font-size:21.3px;line-height:23px;color:#ebebeb;-webkit-text-stroke:0.3px #ebebeb;mix-blend-mode:multiply;font-family:'Liberation Sans', sans-serif;white-space:nowrap">audit<span style="display:inline-block;width:21px;text-align:center">审</span><span style="display:inline-block;width:21px;text-align:center">计</span>01(Audit1)<br>audit-172.18.210.237</div><div style="position:absolute;left:608px;top:-167px;width:300px;height:50px;transform:rotate(-44.3deg);text-align:center;font-size:21.3px;line-height:23px;color:#ebebeb;-webkit-text-stroke:0.3px #ebebeb;mix-blend-mode:multiply;font-family:'Liberation Sans', sans-serif;white-space:nowrap">audit<span style="display:inline-block;width:21px;text-align:center">审</span><span style="display:inline-block;width:21px;text-align:center">计</span>01(Audit1)<br>audit-172.18.210.237</div><div style="position:absolute;left:908px;top:-167px;width:300px;height:50px;transform:rotate(-44.3deg);text-align:center;font-size:21.3px;line-height:23px;color:#ebebeb;-webkit-text-stroke:0.3px #ebebeb;mix-blend-mode:multiply;font-family:'Liberation Sans', sans-serif;white-space:nowrap">audit<span style="display:inline-block;width:21px;text-align:center">审</span><span style="display:inline-block;width:21px;text-align:center">计</span>01(Audit1)<br>audit-172.18.210.237</div><div style="position:absolute;left:1208px;top:-167px;width:300px;height:50px;transform:rotate(-44.3deg);text-align:center;font-size:21.3px;line-height:23px;color:#ebebeb;-webkit-text-stroke:0.3px #ebebeb;mix-blend-mode:multiply;font-family:'Liberation Sans', sans-serif;white-space:nowrap">audit<span style="display:inline-block;width:21px;text-align:center">审</span><span style="display:inline-block;width:21px;text-align:center">计</span>01(Audit1)<br>audit-172.18.210.237</div><div style="position:absolute;left:1508px;top:-167px;width:300px;height:50px;transform:rotate(-44.3deg);text-align:center;font-size:21.3px;line-height:23px;color:#ebebeb;-webkit-text-stroke:0.3px #ebebeb;mix-blend-mode:multiply;font-family:'Liberation Sans', sans-serif;white-space:nowrap">audit<span style="display:inline-block;width:21px;text-align:center">审</span><span style="display:inline-block;width:21px;text-align:center">计</span>01(Audit1)<br>audit-172.18.210.237</div><div style="position:absolute;left:-292px;top:133px;width:300px;height:50px;transform:rotate(-44.3deg);text-align:center;font-size:21.3px;line-height:23px;color:#ebebeb;-webkit-text-stroke:0.3px #ebebeb;mix-blend-mode:multiply;font-family:'Liberation Sans', sans-serif;white-space:nowrap">audit<span style="display:inline-block;width:21px;text-align:center">审</span><span style="display:inline-block;width:21px;text-align:center">计</span>01(Audit1)<br>audit-172.18.210.237</div><div style="position:absolute;left:8px;top:133px;width:300px;height:50px;transform:rotate(-44.3deg);text-align:center;font-size:21.3px;line-height:23px;color:#ebebeb;-webkit-text-stroke:0.3px #ebebeb;mix-blend-mode:multiply;font-family:'Liberation Sans', sans-serif;white-space:nowrap">audit<span style="display:inline-block;width:21px;text-align:center">审</span><span style="display:inline-block;width:21px;text-align:center">计</span>01(Audit1)<br>audit-172.18.210.237</div><div style="position:absolute;left:308px;top:133px;width:300px;height:50px;transform:rotate(-44.3deg);text-align:center;font-size:21.3px;line-height:23px;color:#ebebeb;-webkit-text-stroke:0.3px #ebebeb;mix-blend-mode:multiply;font-family:'Liberation Sans', sans-serif;white-space:nowrap">audit<span style="display:inline-block;width:21px;text-align:center">审</span><span style="display:inline-block;width:21px;text-align:center">计</span>01(Audit1)<br>audit-172.18.210.237</div><div style="position:absolute;left:608px;top:133px;width:300px;height:50px;transform:rotate(-44.3deg);text-align:center;font-size:21.3px;line-height:23px;color:#ebebeb;-webkit-text-stroke:0.3px #ebebeb;mix-blend-mode:multiply;font-family:'Liberation Sans', sans-serif;white-space:nowrap">audit<span style="display:inline-block;width:21px;text-align:center">审</span><span style="display:inline-block;width:21px;text-align:center">计</span>01(Audit1)<br>audit-172.18.210.237</div><div style="position:absolute;left:908px;top:133px;width:300px;height:50px;transform:rotate(-44.3deg);text-align:center;font-size:21.3px;line-height:23px;color:#ebebeb;-webkit-text-stroke:0.3px #ebebeb;mix-blend-mode:multiply;font-family:'Liberation Sans', sans-serif;white-space:nowrap">audit<span style="display:inline-block;width:21px;text-align:center">审</span><span style="display:inline-block;width:21px;text-align:center">计</span>01(Audit1)<br>audit-172.18.210.237</div><div style="position:absolute;left:1208px;top:133px;width:300px;height:50px;transform:rotate(-44.3deg);text-align:center;font-size:21.3px;line-height:23px;color:#ebebeb;-webkit-text-stroke:0.3px #ebebeb;mix-blend-mode:multiply;font-family:'Liberation Sans', sans-serif;white-space:nowrap">audit<span style="display:inline-block;width:21px;text-align:center">审</span><span style="display:inline-block;width:21px;text-align:center">计</span>01(Audit1)<br>audit-172.18.210.237</div><div style="position:absolute;left:1508px;top:133px;width:300px;height:50px;transform:rotate(-44.3deg);text-align:center;font-size:21.3px;line-height:23px;color:#ebebeb;-webkit-text-stroke:0.3px #ebebeb;mix-blend-mode:multiply;font-family:'Liberation Sans', sans-serif;white-space:nowrap">audit<span style="display:inline-block;width:21px;text-align:center">审</span><span style="display:inline-block;width:21px;text-align:center">计</span>01(Audit1)<br>audit-172.18.210.237</div><div style="position:absolute;left:-292px;top:433px;width:300px;height:50px;transform:rotate(-44.3deg);text-align:center;font-size:21.3px;line-height:23px;color:#ebebeb;-webkit-text-stroke:0.3px #ebebeb;mix-blend-mode:multiply;font-family:'Liberation Sans', sans-serif;white-space:nowrap">audit<span style="display:inline-block;width:21px;text-align:center">审</span><span style="display:inline-block;width:21px;text-align:center">计</span>01(Audit1)<br>audit-172.18.210.237</div><div style="position:absolute;left:8px;top:433px;width:300px;height:50px;transform:rotate(-44.3deg);text-align:center;font-size:21.3px;line-height:23px;color:#ebebeb;-webkit-text-stroke:0.3px #ebebeb;mix-blend-mode:multiply;font-family:'Liberation Sans', sans-serif;white-space:nowrap">audit<span style="display:inline-block;width:21px;text-align:center">审</span><span style="display:inline-block;width:21px;text-align:center">计</span>01(Audit1)<br>audit-172.18.210.237</div><div style="position:absolute;left:308px;top:433px;width:300px;height:50px;transform:rotate(-44.3deg);text-align:center;font-size:21.3px;line-height:23px;color:#ebebeb;-webkit-text-stroke:0.3px #ebebeb;mix-blend-mode:multiply;font-family:'Liberation Sans', sans-serif;white-space:nowrap">audit<span style="display:inline-block;width:21px;text-align:center">审</span><span style="display:inline-block;width:21px;text-align:center">计</span>01(Audit1)<br>audit-172.18.210.237</div><div style="position:absolute;left:608px;top:433px;width:300px;height:50px;transform:rotate(-44.3deg);text-align:center;font-size:21.3px;line-height:23px;color:#ebebeb;-webkit-text-stroke:0.3px #ebebeb;mix-blend-mode:multiply;font-family:'Liberation Sans', sans-serif;white-space:nowrap">audit<span style="display:inline-block;width:21px;text-align:center">审</span><span style="display:inline-block;width:21px;text-align:center">计</span>01(Audit1)<br>audit-172.18.210.237</div><div style="position:absolute;left:908px;top:433px;width:300px;height:50px;transform:rotate(-44.3deg);text-align:center;font-size:21.3px;line-height:23px;color:#ebebeb;-webkit-text-stroke:0.3px #ebebeb;mix-blend-mode:multiply;font-family:'Liberation Sans', sans-serif;white-space:nowrap">audit<span style="display:inline-block;width:21px;text-align:center">审</span><span style="display:inline-block;width:21px;text-align:center">计</span>01(Audit1)<br>audit-172.18.210.237</div><div style="position:absolute;left:1208px;top:433px;width:300px;height:50px;transform:rotate(-44.3deg);text-align:center;font-size:21.3px;line-height:23px;color:#ebebeb;-webkit-text-stroke:0.3px #ebebeb;mix-blend-mode:multiply;font-family:'Liberation Sans', sans-serif;white-space:nowrap">audit<span style="display:inline-block;width:21px;text-align:center">审</span><span style="display:inline-block;width:21px;text-align:center">计</span>01(Audit1)<br>audit-172.18.210.237</div><div style="position:absolute;left:1508px;top:433px;width:300px;height:50px;transform:rotate(-44.3deg);text-align:center;font-size:21.3px;line-height:23px;color:#ebebeb;-webkit-text-stroke:0.3px #ebebeb;mix-blend-mode:multiply;font-family:'Liberation Sans', sans-serif;white-space:nowrap">audit<span style="display:inline-block;width:21px;text-align:center">审</span><span style="display:inline-block;width:21px;text-align:center">计</span>01(Audit1)<br>audit-172.18.210.237</div><div style="position:absolute;left:-292px;top:733px;width:300px;height:50px;transform:rotate(-44.3deg);text-align:center;font-size:21.3px;line-height:23px;color:#ebebeb;-webkit-text-stroke:0.3px #ebebeb;mix-blend-mode:multiply;font-family:'Liberation Sans', sans-serif;white-space:nowrap">audit<span style="display:inline-block;width:21px;text-align:center">审</span><span style="display:inline-block;width:21px;text-align:center">计</span>01(Audit1)<br>audit-172.18.210.237</div><div style="position:absolute;left:8px;top:733px;width:300px;height:50px;transform:rotate(-44.3deg);text-align:center;font-size:21.3px;line-height:23px;color:#ebebeb;-webkit-text-stroke:0.3px #ebebeb;mix-blend-mode:multiply;font-family:'Liberation Sans', sans-serif;white-space:nowrap">audit<span style="display:inline-block;width:21px;text-align:center">审</span><span style="display:inline-block;width:21px;text-align:center">计</span>01(Audit1)<br>audit-172.18.210.237</div><div style="position:absolute;left:308px;top:733px;width:300px;height:50px;transform:rotate(-44.3deg);text-align:center;font-size:21.3px;line-height:23px;color:#ebebeb;-webkit-text-stroke:0.3px #ebebeb;mix-blend-mode:multiply;font-family:'Liberation Sans', sans-serif;white-space:nowrap">audit<span style="display:inline-block;width:21px;text-align:center">审</span><span style="display:inline-block;width:21px;text-align:center">计</span>01(Audit1)<br>audit-172.18.210.237</div><div style="position:absolute;left:608px;top:733px;width:300px;height:50px;transform:rotate(-44.3deg);text-align:center;font-size:21.3px;line-height:23px;color:#ebebeb;-webkit-text-stroke:0.3px #ebebeb;mix-blend-mode:multiply;font-family:'Liberation Sans', sans-serif;white-space:nowrap">audit<span style="display:inline-block;width:21px;text-align:center">审</span><span style="display:inline-block;width:21px;text-align:center">计</span>01(Audit1)<br>audit-172.18.210.237</div><div style="position:absolute;left:908px;top:733px;width:300px;height:50px;transform:rotate(-44.3deg);text-align:center;font-size:21.3px;line-height:23px;color:#ebebeb;-webkit-text-stroke:0.3px #ebebeb;mix-blend-mode:multiply;font-family:'Liberation Sans', sans-serif;white-space:nowrap">audit<span style="display:inline-block;width:21px;text-align:center">审</span><span style="display:inline-block;width:21px;text-align:center">计</span>01(Audit1)<br>audit-172.18.210.237</div><div style="position:absolute;left:1208px;top:733px;width:300px;height:50px;transform:rotate(-44.3deg);text-align:center;font-size:21.3px;line-height:23px;color:#ebebeb;-webkit-text-stroke:0.3px #ebebeb;mix-blend-mode:multiply;font-family:'Liberation Sans', sans-serif;white-space:nowrap">audit<span style="display:inline-block;width:21px;text-align:center">审</span><span style="display:inline-block;width:21px;text-align:center">计</span>01(Audit1)<br>audit-172.18.210.237</div><div style="position:absolute;left:1508px;top:733px;width:300px;height:50px;transform:rotate(-44.3deg);text-align:center;font-size:21.3px;line-height:23px;color:#ebebeb;-webkit-text-stroke:0.3px #ebebeb;mix-blend-mode:multiply;font-family:'Liberation Sans', sans-serif;white-space:nowrap">audit<span style="display:inline-block;width:21px;text-align:center">审</span><span style="display:inline-block;width:21px;text-align:center">计</span>01(Audit1)<br>audit-172.18.210.237</div><div style="position:absolute;left:-292px;top:1033px;width:300px;height:50px;transform:rotate(-44.3deg);text-align:center;font-size:21.3px;line-height:23px;color:#ebebeb;-webkit-text-stroke:0.3px #ebebeb;mix-blend-mode:multiply;font-family:'Liberation Sans', sans-serif;white-space:nowrap">audit<span style="display:inline-block;width:21px;text-align:center">审</span><span style="display:inline-block;width:21px;text-align:center">计</span>01(Audit1)<br>audit-172.18.210.237</div><div style="position:absolute;left:8px;top:1033px;width:300px;height:50px;transform:rotate(-44.3deg);text-align:center;font-size:21.3px;line-height:23px;color:#ebebeb;-webkit-text-stroke:0.3px #ebebeb;mix-blend-mode:multiply;font-family:'Liberation Sans', sans-serif;white-space:nowrap">audit<span style="display:inline-block;width:21px;text-align:center">审</span><span style="display:inline-block;width:21px;text-align:center">计</span>01(Audit1)<br>audit-172.18.210.237</div><div style="position:absolute;left:308px;top:1033px;width:300px;height:50px;transform:rotate(-44.3deg);text-align:center;font-size:21.3px;line-height:23px;color:#ebebeb;-webkit-text-stroke:0.3px #ebebeb;mix-blend-mode:multiply;font-family:'Liberation Sans', sans-serif;white-space:nowrap">audit<span style="display:inline-block;width:21px;text-align:center">审</span><span style="display:inline-block;width:21px;text-align:center">计</span>01(Audit1)<br>audit-172.18.210.237</div><div style="position:absolute;left:608px;top:1033px;width:300px;height:50px;transform:rotate(-44.3deg);text-align:center;font-size:21.3px;line-height:23px;color:#ebebeb;-webkit-text-stroke:0.3px #ebebeb;mix-blend-mode:multiply;font-family:'Liberation Sans', sans-serif;white-space:nowrap">audit<span style="display:inline-block;width:21px;text-align:center">审</span><span style="display:inline-block;width:21px;text-align:center">计</span>01(Audit1)<br>audit-172.18.210.237</div><div style="position:absolute;left:908px;top:1033px;width:300px;height:50px;transform:rotate(-44.3deg);text-align:center;font-size:21.3px;line-height:23px;color:#ebebeb;-webkit-text-stroke:0.3px #ebebeb;mix-blend-mode:multiply;font-family:'Liberation Sans', sans-serif;white-space:nowrap">audit<span style="display:inline-block;width:21px;text-align:center">审</span><span style="display:inline-block;width:21px;text-align:center">计</span>01(Audit1)<br>audit-172.18.210.237</div><div style="position:absolute;left:1208px;top:1033px;width:300px;height:50px;transform:rotate(-44.3deg);text-align:center;font-size:21.3px;line-height:23px;color:#ebebeb;-webkit-text-stroke:0.3px #ebebeb;mix-blend-mode:multiply;font-family:'Liberation Sans', sans-serif;white-space:nowrap">audit<span style="display:inline-block;width:21px;text-align:center">审</span><span style="display:inline-block;width:21px;text-align:center">计</span>01(Audit1)<br>audit-172.18.210.237</div><div style="position:absolute;left:1508px;top:1033px;width:300px;height:50px;transform:rotate(-44.3deg);text-align:center;font-size:21.3px;line-height:23px;color:#ebebeb;-webkit-text-stroke:0.3px #ebebeb;mix-blend-mode:multiply;font-family:'Liberation Sans', sans-serif;white-space:nowrap">audit<span style="display:inline-block;width:21px;text-align:center">审</span><span style="display:inline-block;width:21px;text-align:center">计</span>01(Audit1)<br>audit-172.18.210.237</div></div>
</body></html>
